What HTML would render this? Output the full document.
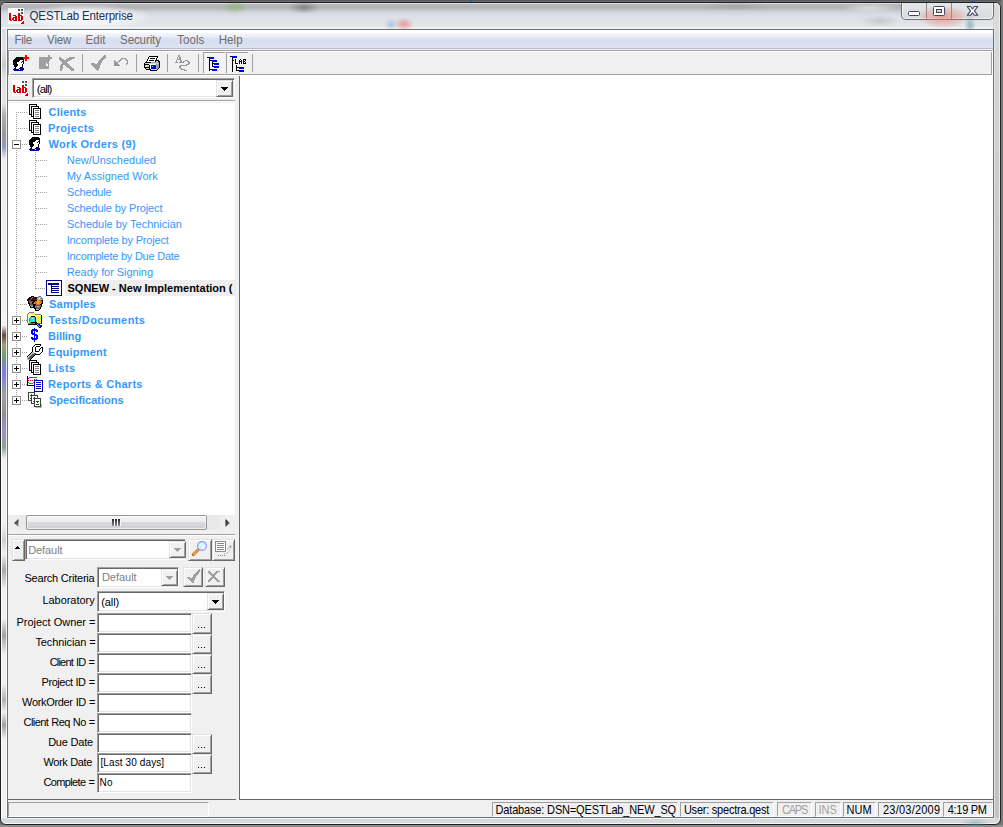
<!DOCTYPE html><html><head><meta charset="utf-8"><style>html,body{margin:0;padding:0;width:1003px;height:827px;overflow:hidden;position:relative;background:#6a6a6a;font-family:"Liberation Sans",sans-serif;} div{box-sizing:border-box}</style></head><body>
<div style="position:absolute;left:0px;top:0px;width:1003px;height:2px;background:linear-gradient(#525252,#747474);"></div>
<div style="position:absolute;left:1001px;top:0px;width:2px;height:827px;background:#7a7a7a;"></div>
<div style="position:absolute;left:0px;top:825px;width:1003px;height:2px;background:#8e8e8e;"></div>
<div style="position:absolute;left:470px;top:1px;width:3px;height:1px;background:#1a64c0;"></div>
<div style="position:absolute;left:972px;top:1px;width:3px;height:1px;background:#1a64c0;"></div>
<div style="position:absolute;left:0px;top:2px;width:1001px;height:823px;border:1px solid #1f2224;border-radius:6px 6px 6px 6px;background:#d8d9da;box-shadow:inset 0 0 0 1px rgba(255,255,255,0.9);"></div>
<div style="position:absolute;left:1px;top:3px;width:999px;height:26px;border-radius:5px 5px 0 0;background:linear-gradient(180deg,#dcdcdc 0px,#dcdcdc 1px,#b8babc 1px,#b0b2b5 4px,#b8babe 6px,#ccced3 8px,#d8dbe2 11px,#dde0e8 14px,#e1e3e7 20px,#e4e6e8 24px,#f0f1f2 24px,#f0f1f2 26px);"></div>
<div style="position:absolute;left:222px;top:3px;width:26px;height:11px;background:radial-gradient(ellipse at 50% 40%, rgba(130,180,100,0.55), rgba(130,180,100,0) 70%);"></div>
<div style="position:absolute;left:840px;top:3px;width:60px;height:10px;background:radial-gradient(ellipse at 50% 50%, rgba(235,236,238,0.7), rgba(235,236,238,0) 70%);"></div>
<div style="position:absolute;left:288px;top:3px;width:32px;height:11px;background:radial-gradient(ellipse at 50% 40%, rgba(80,80,80,0.45), rgba(80,80,80,0) 70%);"></div>
<div style="position:absolute;left:394px;top:17px;width:20px;height:12px;background:radial-gradient(ellipse at 50% 60%, rgba(230,110,100,0.6), rgba(230,110,100,0) 70%);"></div>
<div style="position:absolute;left:384px;top:18px;width:14px;height:11px;background:radial-gradient(ellipse at 50% 60%, rgba(120,170,220,0.5), rgba(120,170,220,0) 70%);"></div>
<div style="position:absolute;left:700px;top:3px;width:70px;height:8px;background:radial-gradient(ellipse at 50% 40%, rgba(120,120,120,0.25), rgba(120,120,120,0) 70%);"></div>
<div style="position:absolute;left:860px;top:15px;width:40px;height:12px;background:radial-gradient(ellipse at 50% 50%, rgba(120,120,120,0.25), rgba(120,120,120,0) 70%);"></div>
<div style="position:absolute;left:2px;top:29px;width:5px;height:789px;background:linear-gradient(180deg,#dcdce6 0px,#e2e2e4 20px,#cacaca 36px,#e4e4e4 50px,#e4e4e4 74px,#b0b0b0 86px,#989898 105px,#9898c0 118px,#eeeeee 130px,#f0f0f0 260px,#f4f4f4 296px,#6a4a3a 306px,#a0a080 316px,#70a070 326px,#7a7af0 343px,#a0a0a0 366px,#909090 386px,#a090c8 401px,#90a090 418px,#f0f0f0 430px,#f0f0f0 495px,#d0d0d0 511px,#f0f0f0 525px,#a8a8a8 541px,#f0f0f0 560px,#f0f0f0 590px,#a0a0a0 606px,#f0f0f0 625px,#f0f0f0 655px,#b0b0b0 671px,#f0f0f0 683px,#a0a0a0 696px,#f0f0f0 710px,#f0f0f0 789px);box-shadow:inset -1px 0 0 rgba(255,255,255,.8);"></div>
<div style="position:absolute;left:994px;top:29px;width:6px;height:789px;background:linear-gradient(180deg,#d8dada 0px,#cfd1d1 100px,#c4c6c6 250px,#c2c4c4 789px);border-left:1px solid #e3e4e4;border-right:1px solid #ececec;"></div>
<div style="position:absolute;left:7px;top:818px;width:988px;height:6px;background:#d8d9da;border-top:1px solid #f4f4f4;border-bottom:1px solid #f0f8fc;"></div>
<div style="position:absolute;left:960px;top:818px;width:30px;height:9px;background:radial-gradient(ellipse at 50% 60%, rgba(90,150,160,0.45), rgba(90,150,160,0) 70%);"></div>
<div style="position:absolute;left:14px;top:3px;width:140px;height:26px;background:radial-gradient(ellipse 50% 50% at 50% 55%, rgba(248,249,250,0.9) 0%, rgba(248,249,250,0.75) 55%, rgba(248,249,250,0) 100%);"></div>
<svg style="position:absolute;left:8px;top:8px;" width="16" height="16" viewBox="0 0 16 16" shape-rendering="crispEdges"><rect x="0" y="0" width="16" height="16" fill="#fff"/><rect x="10" y="1" width="2" height="1" fill="#555"/><rect x="13" y="1" width="2" height="1" fill="#555"/><rect x="10" y="2" width="2" height="1" fill="#555"/><rect x="13" y="2" width="2" height="1" fill="#555"/><rect x="13" y="4" width="2" height="1" fill="#555"/><rect x="13" y="5" width="2" height="1" fill="#555"/><rect x="1" y="5" width="2" height="1" fill="#d00000"/><rect x="10" y="5" width="2" height="1" fill="#d00000"/><rect x="1" y="6" width="2" height="1" fill="#d00000"/><rect x="10" y="6" width="2" height="1" fill="#d00000"/><rect x="1" y="7" width="2" height="1" fill="#d00000"/><rect x="5" y="7" width="3" height="1" fill="#d00000"/><rect x="10" y="7" width="2" height="1" fill="#d00000"/><rect x="12" y="7" width="2" height="1" fill="#d00000"/><rect x="1" y="8" width="2" height="1" fill="#d00000"/><rect x="7" y="8" width="2" height="1" fill="#d00000"/><rect x="10" y="8" width="2" height="1" fill="#d00000"/><rect x="13" y="8" width="2" height="1" fill="#d00000"/><rect x="1" y="9" width="2" height="1" fill="#d00000"/><rect x="5" y="9" width="4" height="1" fill="#d00000"/><rect x="10" y="9" width="2" height="1" fill="#d00000"/><rect x="13" y="9" width="2" height="1" fill="#d00000"/><rect x="1" y="10" width="2" height="1" fill="#d00000"/><rect x="4" y="10" width="2" height="1" fill="#d00000"/><rect x="7" y="10" width="2" height="1" fill="#d00000"/><rect x="10" y="10" width="2" height="1" fill="#d00000"/><rect x="13" y="10" width="2" height="1" fill="#d00000"/><rect x="1" y="11" width="2" height="1" fill="#d00000"/><rect x="4" y="11" width="2" height="1" fill="#d00000"/><rect x="7" y="11" width="2" height="1" fill="#d00000"/><rect x="10" y="11" width="2" height="1" fill="#d00000"/><rect x="13" y="11" width="2" height="1" fill="#d00000"/><rect x="2" y="12" width="2" height="1" fill="#d00000"/><rect x="5" y="12" width="4" height="1" fill="#d00000"/><rect x="10" y="12" width="4" height="1" fill="#d00000"/><rect x="15" y="13" width="1" height="1" fill="#d00000"/><rect x="14" y="14" width="2" height="1" fill="#d00000"/><rect x="13" y="15" width="3" height="1" fill="#d00000"/></svg>
<div style="position:absolute;left:29.60px;top:10.4px;font-size:11.5px;line-height:13.22px;color:#1e3050;font-weight:400;white-space:nowrap;letter-spacing:-0.165px;transform:scaleY(1.08);transform-origin:0 10.60px;">QESTLab Enterprise</div>
<div style="position:absolute;left:993px;top:3px;width:7px;height:26px;border-radius:0 5px 0 0;background:linear-gradient(180deg,#e8e8e8 0px,#dadcdc 3px,#d8dada 26px);box-shadow:inset -1px 0 0 #ececec;"></div>
<div style="position:absolute;left:901px;top:3px;width:93px;height:17px;border:1px solid #6b6e72;border-top:none;border-radius:0 0 5px 5px;background:linear-gradient(#e4e5e6,#d8dadb);box-shadow:inset 1px 0 0 rgba(255,255,255,.7), inset -1px -1px 0 rgba(255,255,255,.7);"></div>
<div style="position:absolute;left:926px;top:3px;width:1px;height:16px;background:#8a8c8e;"></div>
<div style="position:absolute;left:951px;top:3px;width:1px;height:16px;background:#8a8c8e;"></div>
<div style="position:absolute;left:918px;top:6px;width:50px;height:22px;background:radial-gradient(ellipse at 50% 50%, rgba(235,120,105,0.6), rgba(235,120,105,0.25) 50%, rgba(235,120,105,0) 72%);"></div>
<div style="position:absolute;left:964px;top:14px;width:12px;height:16px;background:radial-gradient(ellipse at 50% 70%, rgba(80,140,150,0.5), rgba(80,140,150,0) 70%);"></div>
<div style="position:absolute;left:908px;top:11px;width:12px;height:5px;border:1px solid #3b4660;border-radius:1.5px;background:#fff;"></div>
<div style="position:absolute;left:933px;top:6px;width:12px;height:10px;border:1px solid #3b4660;border-radius:1.5px;background:#fff;"></div>
<div style="position:absolute;left:936px;top:9px;width:6px;height:4px;border:1px solid #3b4660;background:#f0c8c0;"></div>
<svg style="position:absolute;left:966px;top:5px" width="13" height="12" viewBox="0 0 13 12">
<path d="M1.2 1.5 L4.6 1.5 L6.5 3.9 L8.4 1.5 L11.8 1.5 L8.4 5.8 L11.8 10.3 L8.4 10.3 L6.5 7.8 L4.6 10.3 L1.2 10.3 L4.6 5.8 Z" fill="#fff" stroke="#3b4660" stroke-width="1.1" stroke-linejoin="round"/>
</svg>
<div style="position:absolute;left:7px;top:29px;width:987px;height:789px;border:1px solid #6b7075;background:#f0f0f0;"></div>
<div style="position:absolute;left:8px;top:30px;width:985px;height:19px;background:linear-gradient(180deg,#ffffff 0px,#ffffff 2px,#f2f4f9 4px,#e9edf6 7px,#dce1f0 8px,#d9dff0 12px,#dee3f3 18px);border-bottom:1px solid #b6bdcc;"></div>
<div style="position:absolute;left:14.40px;top:34.4px;font-size:11.5px;line-height:13.22px;color:#6d6d6d;font-weight:400;white-space:nowrap;letter-spacing:-0.233px;transform:scaleY(1.08);transform-origin:0 10.60px;">File</div>
<div style="position:absolute;left:47.10px;top:34.4px;font-size:11.5px;line-height:13.22px;color:#6d6d6d;font-weight:400;white-space:nowrap;letter-spacing:-0.167px;transform:scaleY(1.08);transform-origin:0 10.60px;">View</div>
<div style="position:absolute;left:85.60px;top:34.4px;font-size:11.5px;line-height:13.22px;color:#6d6d6d;font-weight:400;white-space:nowrap;letter-spacing:0.033px;transform:scaleY(1.08);transform-origin:0 10.60px;">Edit</div>
<div style="position:absolute;left:120.10px;top:34.4px;font-size:11.5px;line-height:13.22px;color:#6d6d6d;font-weight:400;white-space:nowrap;letter-spacing:-0.100px;transform:scaleY(1.08);transform-origin:0 10.60px;">Security</div>
<div style="position:absolute;left:177.20px;top:34.4px;font-size:11.5px;line-height:13.22px;color:#6d6d6d;font-weight:400;white-space:nowrap;letter-spacing:0.075px;transform:scaleY(1.08);transform-origin:0 10.60px;">Tools</div>
<div style="position:absolute;left:218.70px;top:34.4px;font-size:11.5px;line-height:13.22px;color:#6d6d6d;font-weight:400;white-space:nowrap;letter-spacing:0.067px;transform:scaleY(1.08);transform-origin:0 10.60px;">Help</div>
<div style="position:absolute;left:8px;top:50px;width:985px;height:26px;border-top:1px solid #a0a0a0;border-left:1px solid #a0a0a0;border-bottom:1px solid #fff;border-right:1px solid #fff;box-shadow:inset 1px 1px 0 #fff, inset -1px -1px 0 #a0a0a0;"></div>
<svg style="position:absolute;left:11px;top:57px;" width="14" height="14" viewBox="0 0 14 14" shape-rendering="crispEdges"><rect x="5" y="0" width="7" height="1" fill="#000"/><rect x="4" y="1" width="9" height="1" fill="#000"/><rect x="3" y="2" width="10" height="1" fill="#000"/><rect x="2" y="3" width="7" height="1" fill="#000"/><rect x="9" y="3" width="3" height="1" fill="#fff"/><rect x="12" y="3" width="1" height="1" fill="#000"/><rect x="2" y="4" width="6" height="1" fill="#000"/><rect x="8" y="4" width="3" height="1" fill="#fff"/><rect x="11" y="4" width="2" height="1" fill="#000"/><rect x="2" y="5" width="4" height="1" fill="#000"/><rect x="6" y="5" width="4" height="1" fill="#fff"/><rect x="10" y="5" width="1" height="1" fill="#0000ff"/><rect x="11" y="5" width="1" height="1" fill="#fff"/><rect x="12" y="5" width="1" height="1" fill="#000"/><rect x="2" y="6" width="4" height="1" fill="#000"/><rect x="6" y="6" width="6" height="1" fill="#fff"/><rect x="12" y="6" width="1" height="1" fill="#000"/><rect x="2" y="7" width="5" height="1" fill="#000"/><rect x="7" y="7" width="4" height="1" fill="#fff"/><rect x="11" y="7" width="1" height="1" fill="#000"/><rect x="3" y="8" width="4" height="1" fill="#000"/><rect x="7" y="8" width="4" height="1" fill="#fff"/><rect x="11" y="8" width="1" height="1" fill="#000"/><rect x="3" y="9" width="3" height="1" fill="#000"/><rect x="6" y="9" width="4" height="1" fill="#fff"/><rect x="11" y="9" width="1" height="1" fill="#000"/><rect x="4" y="10" width="1" height="1" fill="#000"/><rect x="5" y="10" width="4" height="1" fill="#fff"/><rect x="9" y="10" width="1" height="1" fill="#000"/><rect x="10" y="10" width="2" height="1" fill="#0000a0"/><rect x="3" y="11" width="2" height="1" fill="#0000a0"/><rect x="5" y="11" width="3" height="1" fill="#fff"/><rect x="8" y="11" width="1" height="1" fill="#000"/><rect x="9" y="11" width="4" height="1" fill="#0000a0"/><rect x="2" y="12" width="6" height="1" fill="#0000a0"/><rect x="8" y="12" width="1" height="1" fill="#fff"/><rect x="9" y="12" width="4" height="1" fill="#0000a0"/><rect x="3" y="13" width="9" height="1" fill="#0000a0"/></svg>
<svg style="position:absolute;left:23px;top:55px;" width="6" height="6" viewBox="0 0 6 6" shape-rendering="crispEdges"><rect x="2" y="0" width="2" height="6" fill="#f00"/><rect x="0" y="2" width="6" height="2" fill="#f00"/></svg>
<svg style="position:absolute;left:36px;top:53px;" width="18" height="18" viewBox="0 0 18 18" shape-rendering="crispEdges"><rect x="12" y="2" width="2" height="1" fill="#a0a0a0"/><rect x="12" y="3" width="2" height="1" fill="#a0a0a0"/><rect x="3" y="4" width="13" height="1" fill="#a0a0a0"/><rect x="3" y="5" width="13" height="1" fill="#a0a0a0"/><rect x="3" y="6" width="11" height="1" fill="#a0a0a0"/><rect x="3" y="7" width="11" height="1" fill="#a0a0a0"/><rect x="3" y="8" width="10" height="1" fill="#a0a0a0"/><rect x="3" y="9" width="10" height="1" fill="#a0a0a0"/><rect x="3" y="10" width="7" height="1" fill="#a0a0a0"/><rect x="10" y="10" width="1" height="1" fill="#fff"/><rect x="11" y="10" width="2" height="1" fill="#a0a0a0"/><rect x="3" y="11" width="7" height="1" fill="#a0a0a0"/><rect x="10" y="11" width="2" height="1" fill="#fff"/><rect x="12" y="11" width="1" height="1" fill="#a0a0a0"/><rect x="3" y="12" width="7" height="1" fill="#a0a0a0"/><rect x="10" y="12" width="2" height="1" fill="#fff"/><rect x="12" y="12" width="1" height="1" fill="#a0a0a0"/><rect x="3" y="13" width="10" height="1" fill="#a0a0a0"/><rect x="3" y="14" width="10" height="1" fill="#a0a0a0"/><rect x="3" y="15" width="10" height="1" fill="#a0a0a0"/></svg>
<svg style="position:absolute;left:57px;top:53px;" width="18" height="18" viewBox="0 0 18 18" shape-rendering="crispEdges"><rect x="2" y="4" width="2" height="1" fill="#a0a0a0"/><rect x="12" y="4" width="6" height="1" fill="#a0a0a0"/><rect x="2" y="5" width="3" height="1" fill="#a0a0a0"/><rect x="10" y="5" width="7" height="1" fill="#a0a0a0"/><rect x="2" y="6" width="5" height="1" fill="#a0a0a0"/><rect x="9" y="6" width="6" height="1" fill="#a0a0a0"/><rect x="3" y="7" width="10" height="1" fill="#a0a0a0"/><rect x="4" y="8" width="7" height="1" fill="#a0a0a0"/><rect x="5" y="9" width="5" height="1" fill="#a0a0a0"/><rect x="5" y="10" width="6" height="1" fill="#a0a0a0"/><rect x="4" y="11" width="8" height="1" fill="#a0a0a0"/><rect x="3" y="12" width="3" height="1" fill="#a0a0a0"/><rect x="8" y="12" width="5" height="1" fill="#a0a0a0"/><rect x="3" y="13" width="3" height="1" fill="#a0a0a0"/><rect x="9" y="13" width="5" height="1" fill="#a0a0a0"/><rect x="3" y="14" width="3" height="1" fill="#a0a0a0"/><rect x="10" y="14" width="5" height="1" fill="#a0a0a0"/><rect x="3" y="15" width="3" height="1" fill="#a0a0a0"/><rect x="12" y="15" width="5" height="1" fill="#a0a0a0"/><rect x="3" y="16" width="2" height="1" fill="#a0a0a0"/><rect x="13" y="16" width="4" height="1" fill="#a0a0a0"/><rect x="3" y="17" width="2" height="1" fill="#a0a0a0"/><rect x="14" y="17" width="3" height="1" fill="#a0a0a0"/></svg>
<div style="position:absolute;left:82px;top:54px;width:1px;height:18px;background:#a0a0a0;"></div>
<div style="position:absolute;left:136px;top:54px;width:1px;height:18px;background:#a0a0a0;"></div>
<div style="position:absolute;left:167px;top:54px;width:1px;height:18px;background:#a0a0a0;"></div>
<div style="position:absolute;left:198px;top:54px;width:1px;height:18px;background:#a0a0a0;"></div>
<div style="position:absolute;left:252px;top:54px;width:1px;height:18px;background:#a0a0a0;"></div>
<svg style="position:absolute;left:88px;top:53px;" width="18" height="18" viewBox="0 0 18 18" shape-rendering="crispEdges"><rect x="16" y="2" width="2" height="1" fill="#a0a0a0"/><rect x="15" y="3" width="3" height="1" fill="#a0a0a0"/><rect x="14" y="4" width="4" height="1" fill="#a0a0a0"/><rect x="13" y="5" width="4" height="1" fill="#a0a0a0"/><rect x="12" y="6" width="4" height="1" fill="#a0a0a0"/><rect x="11" y="7" width="4" height="1" fill="#a0a0a0"/><rect x="10" y="8" width="4" height="1" fill="#a0a0a0"/><rect x="10" y="9" width="4" height="1" fill="#a0a0a0"/><rect x="3" y="10" width="4" height="1" fill="#a0a0a0"/><rect x="9" y="10" width="4" height="1" fill="#a0a0a0"/><rect x="3" y="11" width="10" height="1" fill="#a0a0a0"/><rect x="4" y="12" width="8" height="1" fill="#a0a0a0"/><rect x="5" y="13" width="7" height="1" fill="#a0a0a0"/><rect x="6" y="14" width="6" height="1" fill="#a0a0a0"/><rect x="7" y="15" width="4" height="1" fill="#a0a0a0"/><rect x="8" y="16" width="3" height="1" fill="#a0a0a0"/><rect x="9" y="17" width="1" height="1" fill="#a0a0a0"/></svg>
<svg style="position:absolute;left:111px;top:53px;" width="18" height="14" viewBox="0 0 18 14" shape-rendering="crispEdges"><rect x="10" y="5" width="5" height="1" fill="#999"/><rect x="9" y="6" width="2" height="1" fill="#999"/><rect x="14" y="6" width="2" height="1" fill="#999"/><rect x="3" y="7" width="1" height="1" fill="#999"/><rect x="8" y="7" width="2" height="1" fill="#999"/><rect x="15" y="7" width="2" height="1" fill="#999"/><rect x="3" y="8" width="2" height="1" fill="#999"/><rect x="7" y="8" width="2" height="1" fill="#999"/><rect x="16" y="8" width="1" height="1" fill="#999"/><rect x="3" y="9" width="4" height="1" fill="#999"/><rect x="16" y="9" width="1" height="1" fill="#999"/><rect x="3" y="10" width="4" height="1" fill="#999"/><rect x="15" y="10" width="2" height="1" fill="#999"/><rect x="3" y="11" width="5" height="1" fill="#999"/><rect x="15" y="11" width="1" height="1" fill="#999"/><rect x="3" y="12" width="6" height="1" fill="#999"/></svg>
<svg style="position:absolute;left:142px;top:54px;" width="18" height="18" viewBox="0 0 18 18" shape-rendering="crispEdges"><rect x="7" y="2" width="9" height="1" fill="#000"/><rect x="6" y="3" width="1" height="1" fill="#000"/><rect x="7" y="3" width="8" height="1" fill="#fff"/><rect x="15" y="3" width="1" height="1" fill="#000"/><rect x="6" y="4" width="1" height="1" fill="#000"/><rect x="7" y="4" width="1" height="1" fill="#fff"/><rect x="8" y="4" width="5" height="1" fill="#000"/><rect x="13" y="4" width="1" height="1" fill="#fff"/><rect x="14" y="4" width="1" height="1" fill="#000"/><rect x="5" y="5" width="1" height="1" fill="#000"/><rect x="6" y="5" width="8" height="1" fill="#fff"/><rect x="14" y="5" width="1" height="1" fill="#000"/><rect x="5" y="6" width="1" height="1" fill="#000"/><rect x="6" y="6" width="1" height="1" fill="#fff"/><rect x="7" y="6" width="5" height="1" fill="#000"/><rect x="12" y="6" width="1" height="1" fill="#fff"/><rect x="13" y="6" width="4" height="1" fill="#000"/><rect x="4" y="7" width="1" height="1" fill="#000"/><rect x="5" y="7" width="8" height="1" fill="#fff"/><rect x="13" y="7" width="1" height="1" fill="#000"/><rect x="14" y="7" width="2" height="1" fill="#d4d4d4"/><rect x="16" y="7" width="2" height="1" fill="#000"/><rect x="3" y="8" width="6" height="1" fill="#000"/><rect x="9" y="8" width="8" height="1" fill="#a0a0a0"/><rect x="17" y="8" width="1" height="1" fill="#000"/><rect x="2" y="9" width="1" height="1" fill="#000"/><rect x="3" y="9" width="5" height="1" fill="#d4d4d4"/><rect x="8" y="9" width="8" height="1" fill="#d4d4d4"/><rect x="16" y="9" width="1" height="1" fill="#a0a0a0"/><rect x="17" y="9" width="1" height="1" fill="#000"/><rect x="2" y="10" width="1" height="1" fill="#000"/><rect x="3" y="10" width="4" height="1" fill="#000"/><rect x="7" y="10" width="1" height="1" fill="#d4d4d4"/><rect x="8" y="10" width="6" height="1" fill="#fff"/><rect x="14" y="10" width="3" height="1" fill="#a0a0a0"/><rect x="17" y="10" width="1" height="1" fill="#000"/><rect x="2" y="11" width="1" height="1" fill="#000"/><rect x="3" y="11" width="4" height="1" fill="#d4d4d4"/><rect x="7" y="11" width="1" height="1" fill="#000"/><rect x="8" y="11" width="1" height="1" fill="#fff"/><rect x="9" y="11" width="5" height="1" fill="#0000ff"/><rect x="14" y="11" width="3" height="1" fill="#a0a0a0"/><rect x="17" y="11" width="1" height="1" fill="#000"/><rect x="2" y="12" width="1" height="1" fill="#000"/><rect x="3" y="12" width="4" height="1" fill="#d4d4d4"/><rect x="7" y="12" width="1" height="1" fill="#000"/><rect x="8" y="12" width="1" height="1" fill="#fff"/><rect x="9" y="12" width="1" height="1" fill="#0000ff"/><rect x="10" y="12" width="1" height="1" fill="#00ffff"/><rect x="11" y="12" width="3" height="1" fill="#0000ff"/><rect x="14" y="12" width="3" height="1" fill="#a0a0a0"/><rect x="17" y="12" width="1" height="1" fill="#000"/><rect x="2" y="13" width="1" height="1" fill="#000"/><rect x="3" y="13" width="4" height="1" fill="#000"/><rect x="7" y="13" width="1" height="1" fill="#000"/><rect x="8" y="13" width="1" height="1" fill="#fff"/><rect x="9" y="13" width="5" height="1" fill="#0000ff"/><rect x="14" y="13" width="3" height="1" fill="#a0a0a0"/><rect x="17" y="13" width="1" height="1" fill="#000"/><rect x="3" y="14" width="1" height="1" fill="#000"/><rect x="4" y="14" width="3" height="1" fill="#d4d4d4"/><rect x="7" y="14" width="1" height="1" fill="#000"/><rect x="8" y="14" width="1" height="1" fill="#fff"/><rect x="9" y="14" width="5" height="1" fill="#0000ff"/><rect x="14" y="14" width="2" height="1" fill="#a0a0a0"/><rect x="16" y="14" width="1" height="1" fill="#000"/><rect x="4" y="15" width="4" height="1" fill="#000"/><rect x="8" y="15" width="1" height="1" fill="#000"/><rect x="9" y="15" width="6" height="1" fill="#d4d4d4"/><rect x="15" y="15" width="1" height="1" fill="#000"/><rect x="8" y="16" width="7" height="1" fill="#000"/></svg>
<svg style="position:absolute;left:173px;top:53px;" width="18" height="18" viewBox="0 0 18 18" shape-rendering="crispEdges"><rect x="5" y="2" width="2" height="1" fill="#999"/><rect x="5" y="3" width="2" height="1" fill="#999"/><rect x="4" y="4" width="1" height="1" fill="#999"/><rect x="6" y="4" width="2" height="1" fill="#999"/><rect x="4" y="5" width="1" height="1" fill="#999"/><rect x="6" y="5" width="2" height="1" fill="#999"/><rect x="4" y="6" width="4" height="1" fill="#999"/><rect x="3" y="7" width="1" height="1" fill="#999"/><rect x="7" y="7" width="2" height="1" fill="#999"/><rect x="12" y="7" width="3" height="1" fill="#999"/><rect x="3" y="8" width="1" height="1" fill="#999"/><rect x="7" y="8" width="2" height="1" fill="#999"/><rect x="10" y="8" width="2" height="1" fill="#999"/><rect x="14" y="8" width="2" height="1" fill="#999"/><rect x="2" y="9" width="3" height="1" fill="#999"/><rect x="6" y="9" width="5" height="1" fill="#999"/><rect x="15" y="9" width="2" height="1" fill="#999"/><rect x="15" y="10" width="2" height="1" fill="#999"/><rect x="13" y="11" width="3" height="1" fill="#999"/><rect x="7" y="12" width="7" height="1" fill="#999"/><rect x="6" y="13" width="2" height="1" fill="#999"/><rect x="6" y="14" width="2" height="1" fill="#999"/><rect x="7" y="15" width="2" height="1" fill="#999"/><rect x="8" y="16" width="4" height="1" fill="#999"/><rect x="11" y="17" width="3" height="1" fill="#999"/></svg>
<div style="position:absolute;left:203px;top:52px;width:22px;height:21px;border-top:1px solid #a0a0a0;border-left:1px solid #a0a0a0;background-color:#f8f8f8;background-image:repeating-conic-gradient(#ececec 0 25%, #fcfcfc 0 50%);background-size:2px 2px;"></div>
<div style="position:absolute;left:226px;top:52px;width:22px;height:21px;border-top:1px solid #a0a0a0;border-left:1px solid #a0a0a0;background-color:#f8f8f8;background-image:repeating-conic-gradient(#ececec 0 25%, #fcfcfc 0 50%);background-size:2px 2px;"></div>
<svg style="position:absolute;left:202px;top:51px;" width="24" height="24" viewBox="0 0 24 24" shape-rendering="crispEdges"><rect x="5" y="6" width="2" height="1" fill="#000"/><rect x="7" y="6" width="5" height="1" fill="#0000ff"/><rect x="7" y="7" width="5" height="1" fill="#0000ff"/><rect x="7" y="8" width="1" height="1" fill="#000"/><rect x="7" y="9" width="3" height="1" fill="#000"/><rect x="10" y="9" width="5" height="1" fill="#0000ff"/><rect x="7" y="10" width="1" height="1" fill="#000"/><rect x="10" y="10" width="5" height="1" fill="#0000ff"/><rect x="7" y="11" width="1" height="1" fill="#000"/><rect x="10" y="11" width="1" height="1" fill="#000"/><rect x="7" y="12" width="1" height="1" fill="#000"/><rect x="10" y="12" width="2" height="1" fill="#000"/><rect x="12" y="12" width="5" height="1" fill="#0000ff"/><rect x="7" y="13" width="1" height="1" fill="#000"/><rect x="10" y="13" width="1" height="1" fill="#000"/><rect x="12" y="13" width="5" height="1" fill="#0000ff"/><rect x="7" y="14" width="1" height="1" fill="#000"/><rect x="10" y="14" width="1" height="1" fill="#000"/><rect x="7" y="15" width="1" height="1" fill="#000"/><rect x="10" y="15" width="2" height="1" fill="#000"/><rect x="12" y="15" width="5" height="1" fill="#0000ff"/><rect x="7" y="16" width="1" height="1" fill="#000"/><rect x="12" y="16" width="5" height="1" fill="#0000ff"/><rect x="7" y="17" width="1" height="1" fill="#000"/><rect x="7" y="18" width="3" height="1" fill="#000"/><rect x="10" y="18" width="5" height="1" fill="#0000ff"/><rect x="7" y="19" width="1" height="1" fill="#000"/><rect x="10" y="19" width="5" height="1" fill="#0000ff"/></svg>
<svg style="position:absolute;left:225px;top:51px;" width="24" height="24" viewBox="0 0 24 24" shape-rendering="crispEdges"><rect x="5" y="5" width="2" height="1" fill="#000"/><rect x="7" y="5" width="5" height="1" fill="#0000ff"/><rect x="7" y="6" width="5" height="1" fill="#0000ff"/><rect x="7" y="7" width="1" height="1" fill="#000"/><rect x="7" y="8" width="1" height="1" fill="#000"/><rect x="10" y="8" width="1" height="1" fill="#000"/><rect x="15" y="8" width="1" height="1" fill="#000"/><rect x="18" y="8" width="3" height="1" fill="#000"/><rect x="7" y="9" width="2" height="1" fill="#000"/><rect x="10" y="9" width="1" height="1" fill="#000"/><rect x="14" y="9" width="1" height="1" fill="#000"/><rect x="16" y="9" width="1" height="1" fill="#000"/><rect x="18" y="9" width="1" height="1" fill="#000"/><rect x="20" y="9" width="1" height="1" fill="#000"/><rect x="7" y="10" width="1" height="1" fill="#000"/><rect x="10" y="10" width="1" height="1" fill="#000"/><rect x="14" y="10" width="3" height="1" fill="#000"/><rect x="18" y="10" width="2" height="1" fill="#000"/><rect x="7" y="11" width="1" height="1" fill="#000"/><rect x="10" y="11" width="1" height="1" fill="#000"/><rect x="14" y="11" width="1" height="1" fill="#000"/><rect x="16" y="11" width="1" height="1" fill="#000"/><rect x="18" y="11" width="1" height="1" fill="#000"/><rect x="20" y="11" width="1" height="1" fill="#000"/><rect x="7" y="12" width="1" height="1" fill="#000"/><rect x="10" y="12" width="3" height="1" fill="#000"/><rect x="14" y="12" width="1" height="1" fill="#000"/><rect x="16" y="12" width="1" height="1" fill="#000"/><rect x="18" y="12" width="3" height="1" fill="#000"/><rect x="7" y="13" width="1" height="1" fill="#000"/><rect x="7" y="14" width="1" height="1" fill="#000"/><rect x="11" y="14" width="1" height="1" fill="#000"/><rect x="7" y="15" width="1" height="1" fill="#000"/><rect x="11" y="15" width="1" height="1" fill="#000"/><rect x="7" y="16" width="1" height="1" fill="#000"/><rect x="11" y="16" width="3" height="1" fill="#000"/><rect x="14" y="16" width="5" height="1" fill="#0000ff"/><rect x="7" y="17" width="1" height="1" fill="#000"/><rect x="11" y="17" width="1" height="1" fill="#000"/><rect x="14" y="17" width="5" height="1" fill="#0000ff"/><rect x="7" y="18" width="1" height="1" fill="#000"/><rect x="11" y="18" width="1" height="1" fill="#000"/><rect x="7" y="19" width="1" height="1" fill="#000"/><rect x="11" y="19" width="3" height="1" fill="#000"/><rect x="14" y="19" width="5" height="1" fill="#0000ff"/><rect x="7" y="20" width="1" height="1" fill="#000"/><rect x="14" y="20" width="5" height="1" fill="#0000ff"/></svg>
<svg style="position:absolute;left:12px;top:80px;" width="16" height="16" viewBox="0 0 16 16" shape-rendering="crispEdges"><rect x="0" y="0" width="16" height="16" fill="#fff"/><rect x="10" y="1" width="2" height="1" fill="#555"/><rect x="13" y="1" width="2" height="1" fill="#555"/><rect x="10" y="2" width="2" height="1" fill="#555"/><rect x="13" y="2" width="2" height="1" fill="#555"/><rect x="13" y="4" width="2" height="1" fill="#555"/><rect x="13" y="5" width="2" height="1" fill="#555"/><rect x="1" y="5" width="2" height="1" fill="#d00000"/><rect x="10" y="5" width="2" height="1" fill="#d00000"/><rect x="1" y="6" width="2" height="1" fill="#d00000"/><rect x="10" y="6" width="2" height="1" fill="#d00000"/><rect x="1" y="7" width="2" height="1" fill="#d00000"/><rect x="5" y="7" width="3" height="1" fill="#d00000"/><rect x="10" y="7" width="2" height="1" fill="#d00000"/><rect x="12" y="7" width="2" height="1" fill="#d00000"/><rect x="1" y="8" width="2" height="1" fill="#d00000"/><rect x="7" y="8" width="2" height="1" fill="#d00000"/><rect x="10" y="8" width="2" height="1" fill="#d00000"/><rect x="13" y="8" width="2" height="1" fill="#d00000"/><rect x="1" y="9" width="2" height="1" fill="#d00000"/><rect x="5" y="9" width="4" height="1" fill="#d00000"/><rect x="10" y="9" width="2" height="1" fill="#d00000"/><rect x="13" y="9" width="2" height="1" fill="#d00000"/><rect x="1" y="10" width="2" height="1" fill="#d00000"/><rect x="4" y="10" width="2" height="1" fill="#d00000"/><rect x="7" y="10" width="2" height="1" fill="#d00000"/><rect x="10" y="10" width="2" height="1" fill="#d00000"/><rect x="13" y="10" width="2" height="1" fill="#d00000"/><rect x="1" y="11" width="2" height="1" fill="#d00000"/><rect x="4" y="11" width="2" height="1" fill="#d00000"/><rect x="7" y="11" width="2" height="1" fill="#d00000"/><rect x="10" y="11" width="2" height="1" fill="#d00000"/><rect x="13" y="11" width="2" height="1" fill="#d00000"/><rect x="2" y="12" width="2" height="1" fill="#d00000"/><rect x="5" y="12" width="4" height="1" fill="#d00000"/><rect x="10" y="12" width="4" height="1" fill="#d00000"/><rect x="15" y="13" width="1" height="1" fill="#d00000"/><rect x="14" y="14" width="2" height="1" fill="#d00000"/><rect x="13" y="15" width="3" height="1" fill="#d00000"/></svg>
<div style="position:absolute;left:32px;top:78px;width:203px;height:20px;background:#fff;border-top:1px solid #a0a0a0;border-left:1px solid #a0a0a0;border-bottom:1px solid #fff;border-right:1px solid #fff;box-shadow:inset 1px 1px 0 #696969, inset -1px -1px 0 #e3e3e3;"></div>
<div style="position:absolute;left:216px;top:80px;width:17px;height:17px;background:#f0f0f0;border-top:1px solid #e3e3e3;border-left:1px solid #e3e3e3;border-bottom:1px solid #696969;border-right:1px solid #696969;box-shadow:inset 1px 1px 0 #fff, inset -1px -1px 0 #a0a0a0;"></div>
<svg style="position:absolute;left:221px;top:87px;" width="7" height="4" viewBox="0 0 7 4" shape-rendering="crispEdges"><rect x="0" y="0" width="7" height="1" fill="#000"/><rect x="1" y="1" width="5" height="1" fill="#000"/><rect x="2" y="2" width="3" height="1" fill="#000"/><rect x="3" y="3" width="1" height="1" fill="#000"/></svg>
<div style="position:absolute;left:36.80px;top:82.9px;font-size:11.5px;line-height:13.22px;color:#000;font-weight:400;white-space:nowrap;letter-spacing:-0.900px;">(all)</div>
<div style="position:absolute;left:8px;top:100px;width:227px;height:1px;background:#a0a0a0;"></div>
<div style="position:absolute;left:8px;top:101px;width:227px;height:414px;background:#fff;"></div>
<div style="position:absolute;left:9px;top:102px;width:226px;height:1px;background:#f0f0f0;"></div>
<div style="position:absolute;left:8px;top:534px;width:227px;height:1px;background:#a0a0a0;"></div>
<div style="position:absolute;left:8px;top:535px;width:227px;height:1px;background:#fff;"></div>
<svg style="position:absolute;left:16px;top:112px;" width="1" height="289" viewBox="0 0 1 289" shape-rendering="crispEdges"><rect x="0" y="0" width="1" height="1" fill="#a0a0a0"/><rect x="0" y="2" width="1" height="1" fill="#a0a0a0"/><rect x="0" y="4" width="1" height="1" fill="#a0a0a0"/><rect x="0" y="6" width="1" height="1" fill="#a0a0a0"/><rect x="0" y="8" width="1" height="1" fill="#a0a0a0"/><rect x="0" y="10" width="1" height="1" fill="#a0a0a0"/><rect x="0" y="12" width="1" height="1" fill="#a0a0a0"/><rect x="0" y="14" width="1" height="1" fill="#a0a0a0"/><rect x="0" y="16" width="1" height="1" fill="#a0a0a0"/><rect x="0" y="18" width="1" height="1" fill="#a0a0a0"/><rect x="0" y="20" width="1" height="1" fill="#a0a0a0"/><rect x="0" y="22" width="1" height="1" fill="#a0a0a0"/><rect x="0" y="24" width="1" height="1" fill="#a0a0a0"/><rect x="0" y="26" width="1" height="1" fill="#a0a0a0"/><rect x="0" y="28" width="1" height="1" fill="#a0a0a0"/><rect x="0" y="30" width="1" height="1" fill="#a0a0a0"/><rect x="0" y="32" width="1" height="1" fill="#a0a0a0"/><rect x="0" y="34" width="1" height="1" fill="#a0a0a0"/><rect x="0" y="36" width="1" height="1" fill="#a0a0a0"/><rect x="0" y="38" width="1" height="1" fill="#a0a0a0"/><rect x="0" y="40" width="1" height="1" fill="#a0a0a0"/><rect x="0" y="42" width="1" height="1" fill="#a0a0a0"/><rect x="0" y="44" width="1" height="1" fill="#a0a0a0"/><rect x="0" y="46" width="1" height="1" fill="#a0a0a0"/><rect x="0" y="48" width="1" height="1" fill="#a0a0a0"/><rect x="0" y="50" width="1" height="1" fill="#a0a0a0"/><rect x="0" y="52" width="1" height="1" fill="#a0a0a0"/><rect x="0" y="54" width="1" height="1" fill="#a0a0a0"/><rect x="0" y="56" width="1" height="1" fill="#a0a0a0"/><rect x="0" y="58" width="1" height="1" fill="#a0a0a0"/><rect x="0" y="60" width="1" height="1" fill="#a0a0a0"/><rect x="0" y="62" width="1" height="1" fill="#a0a0a0"/><rect x="0" y="64" width="1" height="1" fill="#a0a0a0"/><rect x="0" y="66" width="1" height="1" fill="#a0a0a0"/><rect x="0" y="68" width="1" height="1" fill="#a0a0a0"/><rect x="0" y="70" width="1" height="1" fill="#a0a0a0"/><rect x="0" y="72" width="1" height="1" fill="#a0a0a0"/><rect x="0" y="74" width="1" height="1" fill="#a0a0a0"/><rect x="0" y="76" width="1" height="1" fill="#a0a0a0"/><rect x="0" y="78" width="1" height="1" fill="#a0a0a0"/><rect x="0" y="80" width="1" height="1" fill="#a0a0a0"/><rect x="0" y="82" width="1" height="1" fill="#a0a0a0"/><rect x="0" y="84" width="1" height="1" fill="#a0a0a0"/><rect x="0" y="86" width="1" height="1" fill="#a0a0a0"/><rect x="0" y="88" width="1" height="1" fill="#a0a0a0"/><rect x="0" y="90" width="1" height="1" fill="#a0a0a0"/><rect x="0" y="92" width="1" height="1" fill="#a0a0a0"/><rect x="0" y="94" width="1" height="1" fill="#a0a0a0"/><rect x="0" y="96" width="1" height="1" fill="#a0a0a0"/><rect x="0" y="98" width="1" height="1" fill="#a0a0a0"/><rect x="0" y="100" width="1" height="1" fill="#a0a0a0"/><rect x="0" y="102" width="1" height="1" fill="#a0a0a0"/><rect x="0" y="104" width="1" height="1" fill="#a0a0a0"/><rect x="0" y="106" width="1" height="1" fill="#a0a0a0"/><rect x="0" y="108" width="1" height="1" fill="#a0a0a0"/><rect x="0" y="110" width="1" height="1" fill="#a0a0a0"/><rect x="0" y="112" width="1" height="1" fill="#a0a0a0"/><rect x="0" y="114" width="1" height="1" fill="#a0a0a0"/><rect x="0" y="116" width="1" height="1" fill="#a0a0a0"/><rect x="0" y="118" width="1" height="1" fill="#a0a0a0"/><rect x="0" y="120" width="1" height="1" fill="#a0a0a0"/><rect x="0" y="122" width="1" height="1" fill="#a0a0a0"/><rect x="0" y="124" width="1" height="1" fill="#a0a0a0"/><rect x="0" y="126" width="1" height="1" fill="#a0a0a0"/><rect x="0" y="128" width="1" height="1" fill="#a0a0a0"/><rect x="0" y="130" width="1" height="1" fill="#a0a0a0"/><rect x="0" y="132" width="1" height="1" fill="#a0a0a0"/><rect x="0" y="134" width="1" height="1" fill="#a0a0a0"/><rect x="0" y="136" width="1" height="1" fill="#a0a0a0"/><rect x="0" y="138" width="1" height="1" fill="#a0a0a0"/><rect x="0" y="140" width="1" height="1" fill="#a0a0a0"/><rect x="0" y="142" width="1" height="1" fill="#a0a0a0"/><rect x="0" y="144" width="1" height="1" fill="#a0a0a0"/><rect x="0" y="146" width="1" height="1" fill="#a0a0a0"/><rect x="0" y="148" width="1" height="1" fill="#a0a0a0"/><rect x="0" y="150" width="1" height="1" fill="#a0a0a0"/><rect x="0" y="152" width="1" height="1" fill="#a0a0a0"/><rect x="0" y="154" width="1" height="1" fill="#a0a0a0"/><rect x="0" y="156" width="1" height="1" fill="#a0a0a0"/><rect x="0" y="158" width="1" height="1" fill="#a0a0a0"/><rect x="0" y="160" width="1" height="1" fill="#a0a0a0"/><rect x="0" y="162" width="1" height="1" fill="#a0a0a0"/><rect x="0" y="164" width="1" height="1" fill="#a0a0a0"/><rect x="0" y="166" width="1" height="1" fill="#a0a0a0"/><rect x="0" y="168" width="1" height="1" fill="#a0a0a0"/><rect x="0" y="170" width="1" height="1" fill="#a0a0a0"/><rect x="0" y="172" width="1" height="1" fill="#a0a0a0"/><rect x="0" y="174" width="1" height="1" fill="#a0a0a0"/><rect x="0" y="176" width="1" height="1" fill="#a0a0a0"/><rect x="0" y="178" width="1" height="1" fill="#a0a0a0"/><rect x="0" y="180" width="1" height="1" fill="#a0a0a0"/><rect x="0" y="182" width="1" height="1" fill="#a0a0a0"/><rect x="0" y="184" width="1" height="1" fill="#a0a0a0"/><rect x="0" y="186" width="1" height="1" fill="#a0a0a0"/><rect x="0" y="188" width="1" height="1" fill="#a0a0a0"/><rect x="0" y="190" width="1" height="1" fill="#a0a0a0"/><rect x="0" y="192" width="1" height="1" fill="#a0a0a0"/><rect x="0" y="194" width="1" height="1" fill="#a0a0a0"/><rect x="0" y="196" width="1" height="1" fill="#a0a0a0"/><rect x="0" y="198" width="1" height="1" fill="#a0a0a0"/><rect x="0" y="200" width="1" height="1" fill="#a0a0a0"/><rect x="0" y="202" width="1" height="1" fill="#a0a0a0"/><rect x="0" y="204" width="1" height="1" fill="#a0a0a0"/><rect x="0" y="206" width="1" height="1" fill="#a0a0a0"/><rect x="0" y="208" width="1" height="1" fill="#a0a0a0"/><rect x="0" y="210" width="1" height="1" fill="#a0a0a0"/><rect x="0" y="212" width="1" height="1" fill="#a0a0a0"/><rect x="0" y="214" width="1" height="1" fill="#a0a0a0"/><rect x="0" y="216" width="1" height="1" fill="#a0a0a0"/><rect x="0" y="218" width="1" height="1" fill="#a0a0a0"/><rect x="0" y="220" width="1" height="1" fill="#a0a0a0"/><rect x="0" y="222" width="1" height="1" fill="#a0a0a0"/><rect x="0" y="224" width="1" height="1" fill="#a0a0a0"/><rect x="0" y="226" width="1" height="1" fill="#a0a0a0"/><rect x="0" y="228" width="1" height="1" fill="#a0a0a0"/><rect x="0" y="230" width="1" height="1" fill="#a0a0a0"/><rect x="0" y="232" width="1" height="1" fill="#a0a0a0"/><rect x="0" y="234" width="1" height="1" fill="#a0a0a0"/><rect x="0" y="236" width="1" height="1" fill="#a0a0a0"/><rect x="0" y="238" width="1" height="1" fill="#a0a0a0"/><rect x="0" y="240" width="1" height="1" fill="#a0a0a0"/><rect x="0" y="242" width="1" height="1" fill="#a0a0a0"/><rect x="0" y="244" width="1" height="1" fill="#a0a0a0"/><rect x="0" y="246" width="1" height="1" fill="#a0a0a0"/><rect x="0" y="248" width="1" height="1" fill="#a0a0a0"/><rect x="0" y="250" width="1" height="1" fill="#a0a0a0"/><rect x="0" y="252" width="1" height="1" fill="#a0a0a0"/><rect x="0" y="254" width="1" height="1" fill="#a0a0a0"/><rect x="0" y="256" width="1" height="1" fill="#a0a0a0"/><rect x="0" y="258" width="1" height="1" fill="#a0a0a0"/><rect x="0" y="260" width="1" height="1" fill="#a0a0a0"/><rect x="0" y="262" width="1" height="1" fill="#a0a0a0"/><rect x="0" y="264" width="1" height="1" fill="#a0a0a0"/><rect x="0" y="266" width="1" height="1" fill="#a0a0a0"/><rect x="0" y="268" width="1" height="1" fill="#a0a0a0"/><rect x="0" y="270" width="1" height="1" fill="#a0a0a0"/><rect x="0" y="272" width="1" height="1" fill="#a0a0a0"/><rect x="0" y="274" width="1" height="1" fill="#a0a0a0"/><rect x="0" y="276" width="1" height="1" fill="#a0a0a0"/><rect x="0" y="278" width="1" height="1" fill="#a0a0a0"/><rect x="0" y="280" width="1" height="1" fill="#a0a0a0"/><rect x="0" y="282" width="1" height="1" fill="#a0a0a0"/><rect x="0" y="284" width="1" height="1" fill="#a0a0a0"/><rect x="0" y="286" width="1" height="1" fill="#a0a0a0"/><rect x="0" y="288" width="1" height="1" fill="#a0a0a0"/></svg>
<svg style="position:absolute;left:35px;top:152px;" width="1" height="137" viewBox="0 0 1 137" shape-rendering="crispEdges"><rect x="0" y="0" width="1" height="1" fill="#a0a0a0"/><rect x="0" y="2" width="1" height="1" fill="#a0a0a0"/><rect x="0" y="4" width="1" height="1" fill="#a0a0a0"/><rect x="0" y="6" width="1" height="1" fill="#a0a0a0"/><rect x="0" y="8" width="1" height="1" fill="#a0a0a0"/><rect x="0" y="10" width="1" height="1" fill="#a0a0a0"/><rect x="0" y="12" width="1" height="1" fill="#a0a0a0"/><rect x="0" y="14" width="1" height="1" fill="#a0a0a0"/><rect x="0" y="16" width="1" height="1" fill="#a0a0a0"/><rect x="0" y="18" width="1" height="1" fill="#a0a0a0"/><rect x="0" y="20" width="1" height="1" fill="#a0a0a0"/><rect x="0" y="22" width="1" height="1" fill="#a0a0a0"/><rect x="0" y="24" width="1" height="1" fill="#a0a0a0"/><rect x="0" y="26" width="1" height="1" fill="#a0a0a0"/><rect x="0" y="28" width="1" height="1" fill="#a0a0a0"/><rect x="0" y="30" width="1" height="1" fill="#a0a0a0"/><rect x="0" y="32" width="1" height="1" fill="#a0a0a0"/><rect x="0" y="34" width="1" height="1" fill="#a0a0a0"/><rect x="0" y="36" width="1" height="1" fill="#a0a0a0"/><rect x="0" y="38" width="1" height="1" fill="#a0a0a0"/><rect x="0" y="40" width="1" height="1" fill="#a0a0a0"/><rect x="0" y="42" width="1" height="1" fill="#a0a0a0"/><rect x="0" y="44" width="1" height="1" fill="#a0a0a0"/><rect x="0" y="46" width="1" height="1" fill="#a0a0a0"/><rect x="0" y="48" width="1" height="1" fill="#a0a0a0"/><rect x="0" y="50" width="1" height="1" fill="#a0a0a0"/><rect x="0" y="52" width="1" height="1" fill="#a0a0a0"/><rect x="0" y="54" width="1" height="1" fill="#a0a0a0"/><rect x="0" y="56" width="1" height="1" fill="#a0a0a0"/><rect x="0" y="58" width="1" height="1" fill="#a0a0a0"/><rect x="0" y="60" width="1" height="1" fill="#a0a0a0"/><rect x="0" y="62" width="1" height="1" fill="#a0a0a0"/><rect x="0" y="64" width="1" height="1" fill="#a0a0a0"/><rect x="0" y="66" width="1" height="1" fill="#a0a0a0"/><rect x="0" y="68" width="1" height="1" fill="#a0a0a0"/><rect x="0" y="70" width="1" height="1" fill="#a0a0a0"/><rect x="0" y="72" width="1" height="1" fill="#a0a0a0"/><rect x="0" y="74" width="1" height="1" fill="#a0a0a0"/><rect x="0" y="76" width="1" height="1" fill="#a0a0a0"/><rect x="0" y="78" width="1" height="1" fill="#a0a0a0"/><rect x="0" y="80" width="1" height="1" fill="#a0a0a0"/><rect x="0" y="82" width="1" height="1" fill="#a0a0a0"/><rect x="0" y="84" width="1" height="1" fill="#a0a0a0"/><rect x="0" y="86" width="1" height="1" fill="#a0a0a0"/><rect x="0" y="88" width="1" height="1" fill="#a0a0a0"/><rect x="0" y="90" width="1" height="1" fill="#a0a0a0"/><rect x="0" y="92" width="1" height="1" fill="#a0a0a0"/><rect x="0" y="94" width="1" height="1" fill="#a0a0a0"/><rect x="0" y="96" width="1" height="1" fill="#a0a0a0"/><rect x="0" y="98" width="1" height="1" fill="#a0a0a0"/><rect x="0" y="100" width="1" height="1" fill="#a0a0a0"/><rect x="0" y="102" width="1" height="1" fill="#a0a0a0"/><rect x="0" y="104" width="1" height="1" fill="#a0a0a0"/><rect x="0" y="106" width="1" height="1" fill="#a0a0a0"/><rect x="0" y="108" width="1" height="1" fill="#a0a0a0"/><rect x="0" y="110" width="1" height="1" fill="#a0a0a0"/><rect x="0" y="112" width="1" height="1" fill="#a0a0a0"/><rect x="0" y="114" width="1" height="1" fill="#a0a0a0"/><rect x="0" y="116" width="1" height="1" fill="#a0a0a0"/><rect x="0" y="118" width="1" height="1" fill="#a0a0a0"/><rect x="0" y="120" width="1" height="1" fill="#a0a0a0"/><rect x="0" y="122" width="1" height="1" fill="#a0a0a0"/><rect x="0" y="124" width="1" height="1" fill="#a0a0a0"/><rect x="0" y="126" width="1" height="1" fill="#a0a0a0"/><rect x="0" y="128" width="1" height="1" fill="#a0a0a0"/><rect x="0" y="130" width="1" height="1" fill="#a0a0a0"/><rect x="0" y="132" width="1" height="1" fill="#a0a0a0"/><rect x="0" y="134" width="1" height="1" fill="#a0a0a0"/><rect x="0" y="136" width="1" height="1" fill="#a0a0a0"/></svg>
<svg style="position:absolute;left:16px;top:112px;" width="11" height="1" viewBox="0 0 11 1" shape-rendering="crispEdges"><rect x="0" y="0" width="1" height="1" fill="#a0a0a0"/><rect x="2" y="0" width="1" height="1" fill="#a0a0a0"/><rect x="4" y="0" width="1" height="1" fill="#a0a0a0"/><rect x="6" y="0" width="1" height="1" fill="#a0a0a0"/><rect x="8" y="0" width="1" height="1" fill="#a0a0a0"/><rect x="10" y="0" width="1" height="1" fill="#a0a0a0"/></svg>
<div style="position:absolute;left:48.60px;top:105.86px;font-size:11px;line-height:12.65px;color:#3399ff;font-weight:700;white-space:nowrap;letter-spacing:0.167px;">Clients</div>
<svg style="position:absolute;left:16px;top:128px;" width="11" height="1" viewBox="0 0 11 1" shape-rendering="crispEdges"><rect x="0" y="0" width="1" height="1" fill="#a0a0a0"/><rect x="2" y="0" width="1" height="1" fill="#a0a0a0"/><rect x="4" y="0" width="1" height="1" fill="#a0a0a0"/><rect x="6" y="0" width="1" height="1" fill="#a0a0a0"/><rect x="8" y="0" width="1" height="1" fill="#a0a0a0"/><rect x="10" y="0" width="1" height="1" fill="#a0a0a0"/></svg>
<div style="position:absolute;left:48.00px;top:121.86px;font-size:11px;line-height:12.65px;color:#3399ff;font-weight:700;white-space:nowrap;letter-spacing:0.343px;">Projects</div>
<svg style="position:absolute;left:16px;top:144px;" width="11" height="1" viewBox="0 0 11 1" shape-rendering="crispEdges"><rect x="0" y="0" width="1" height="1" fill="#a0a0a0"/><rect x="2" y="0" width="1" height="1" fill="#a0a0a0"/><rect x="4" y="0" width="1" height="1" fill="#a0a0a0"/><rect x="6" y="0" width="1" height="1" fill="#a0a0a0"/><rect x="8" y="0" width="1" height="1" fill="#a0a0a0"/><rect x="10" y="0" width="1" height="1" fill="#a0a0a0"/></svg>
<div style="position:absolute;left:12px;top:140px;width:9px;height:9px;border:1px solid #919191;background:#fff;"></div>
<div style="position:absolute;left:14px;top:144px;width:5px;height:1px;background:#000;"></div>
<div style="position:absolute;left:48.60px;top:137.86px;font-size:11px;line-height:12.65px;color:#3399ff;font-weight:700;white-space:nowrap;letter-spacing:0.293px;">Work Orders (9)</div>
<svg style="position:absolute;left:36px;top:160px;" width="11" height="1" viewBox="0 0 11 1" shape-rendering="crispEdges"><rect x="0" y="0" width="1" height="1" fill="#a0a0a0"/><rect x="2" y="0" width="1" height="1" fill="#a0a0a0"/><rect x="4" y="0" width="1" height="1" fill="#a0a0a0"/><rect x="6" y="0" width="1" height="1" fill="#a0a0a0"/><rect x="8" y="0" width="1" height="1" fill="#a0a0a0"/><rect x="10" y="0" width="1" height="1" fill="#a0a0a0"/></svg>
<div style="position:absolute;left:66.70px;top:153.86px;font-size:11px;line-height:12.65px;color:#3399ff;font-weight:400;white-space:nowrap;letter-spacing:-0.000px;">New/Unscheduled</div>
<svg style="position:absolute;left:36px;top:176px;" width="11" height="1" viewBox="0 0 11 1" shape-rendering="crispEdges"><rect x="0" y="0" width="1" height="1" fill="#a0a0a0"/><rect x="2" y="0" width="1" height="1" fill="#a0a0a0"/><rect x="4" y="0" width="1" height="1" fill="#a0a0a0"/><rect x="6" y="0" width="1" height="1" fill="#a0a0a0"/><rect x="8" y="0" width="1" height="1" fill="#a0a0a0"/><rect x="10" y="0" width="1" height="1" fill="#a0a0a0"/></svg>
<div style="position:absolute;left:66.70px;top:169.86px;font-size:11px;line-height:12.65px;color:#3399ff;font-weight:400;white-space:nowrap;letter-spacing:0.007px;">My Assigned Work</div>
<svg style="position:absolute;left:36px;top:192px;" width="11" height="1" viewBox="0 0 11 1" shape-rendering="crispEdges"><rect x="0" y="0" width="1" height="1" fill="#a0a0a0"/><rect x="2" y="0" width="1" height="1" fill="#a0a0a0"/><rect x="4" y="0" width="1" height="1" fill="#a0a0a0"/><rect x="6" y="0" width="1" height="1" fill="#a0a0a0"/><rect x="8" y="0" width="1" height="1" fill="#a0a0a0"/><rect x="10" y="0" width="1" height="1" fill="#a0a0a0"/></svg>
<div style="position:absolute;left:67.00px;top:185.86px;font-size:11px;line-height:12.65px;color:#3399ff;font-weight:400;white-space:nowrap;letter-spacing:-0.171px;">Schedule</div>
<svg style="position:absolute;left:36px;top:208px;" width="11" height="1" viewBox="0 0 11 1" shape-rendering="crispEdges"><rect x="0" y="0" width="1" height="1" fill="#a0a0a0"/><rect x="2" y="0" width="1" height="1" fill="#a0a0a0"/><rect x="4" y="0" width="1" height="1" fill="#a0a0a0"/><rect x="6" y="0" width="1" height="1" fill="#a0a0a0"/><rect x="8" y="0" width="1" height="1" fill="#a0a0a0"/><rect x="10" y="0" width="1" height="1" fill="#a0a0a0"/></svg>
<div style="position:absolute;left:67.00px;top:201.86px;font-size:11px;line-height:12.65px;color:#3399ff;font-weight:400;white-space:nowrap;letter-spacing:-0.128px;">Schedule by Project</div>
<svg style="position:absolute;left:36px;top:224px;" width="11" height="1" viewBox="0 0 11 1" shape-rendering="crispEdges"><rect x="0" y="0" width="1" height="1" fill="#a0a0a0"/><rect x="2" y="0" width="1" height="1" fill="#a0a0a0"/><rect x="4" y="0" width="1" height="1" fill="#a0a0a0"/><rect x="6" y="0" width="1" height="1" fill="#a0a0a0"/><rect x="8" y="0" width="1" height="1" fill="#a0a0a0"/><rect x="10" y="0" width="1" height="1" fill="#a0a0a0"/></svg>
<div style="position:absolute;left:67.00px;top:217.86px;font-size:11px;line-height:12.65px;color:#3399ff;font-weight:400;white-space:nowrap;letter-spacing:-0.024px;">Schedule by Technician</div>
<svg style="position:absolute;left:36px;top:240px;" width="11" height="1" viewBox="0 0 11 1" shape-rendering="crispEdges"><rect x="0" y="0" width="1" height="1" fill="#a0a0a0"/><rect x="2" y="0" width="1" height="1" fill="#a0a0a0"/><rect x="4" y="0" width="1" height="1" fill="#a0a0a0"/><rect x="6" y="0" width="1" height="1" fill="#a0a0a0"/><rect x="8" y="0" width="1" height="1" fill="#a0a0a0"/><rect x="10" y="0" width="1" height="1" fill="#a0a0a0"/></svg>
<div style="position:absolute;left:66.70px;top:233.86px;font-size:11px;line-height:12.65px;color:#3399ff;font-weight:400;white-space:nowrap;letter-spacing:-0.180px;">Incomplete by Project</div>
<svg style="position:absolute;left:36px;top:256px;" width="11" height="1" viewBox="0 0 11 1" shape-rendering="crispEdges"><rect x="0" y="0" width="1" height="1" fill="#a0a0a0"/><rect x="2" y="0" width="1" height="1" fill="#a0a0a0"/><rect x="4" y="0" width="1" height="1" fill="#a0a0a0"/><rect x="6" y="0" width="1" height="1" fill="#a0a0a0"/><rect x="8" y="0" width="1" height="1" fill="#a0a0a0"/><rect x="10" y="0" width="1" height="1" fill="#a0a0a0"/></svg>
<div style="position:absolute;left:66.70px;top:249.86px;font-size:11px;line-height:12.65px;color:#3399ff;font-weight:400;white-space:nowrap;letter-spacing:-0.238px;">Incomplete by Due Date</div>
<svg style="position:absolute;left:36px;top:272px;" width="11" height="1" viewBox="0 0 11 1" shape-rendering="crispEdges"><rect x="0" y="0" width="1" height="1" fill="#a0a0a0"/><rect x="2" y="0" width="1" height="1" fill="#a0a0a0"/><rect x="4" y="0" width="1" height="1" fill="#a0a0a0"/><rect x="6" y="0" width="1" height="1" fill="#a0a0a0"/><rect x="8" y="0" width="1" height="1" fill="#a0a0a0"/><rect x="10" y="0" width="1" height="1" fill="#a0a0a0"/></svg>
<div style="position:absolute;left:66.70px;top:265.86px;font-size:11px;line-height:12.65px;color:#3399ff;font-weight:400;white-space:nowrap;letter-spacing:-0.069px;">Ready for Signing</div>
<svg style="position:absolute;left:36px;top:288px;" width="11" height="1" viewBox="0 0 11 1" shape-rendering="crispEdges"><rect x="0" y="0" width="1" height="1" fill="#a0a0a0"/><rect x="2" y="0" width="1" height="1" fill="#a0a0a0"/><rect x="4" y="0" width="1" height="1" fill="#a0a0a0"/><rect x="6" y="0" width="1" height="1" fill="#a0a0a0"/><rect x="8" y="0" width="1" height="1" fill="#a0a0a0"/><rect x="10" y="0" width="1" height="1" fill="#a0a0a0"/></svg>
<div style="position:absolute;left:65px;top:280px;width:172px;height:16px;background:#eeeeee;"></div>
<div style="position:absolute;left:67.5px;top:282px;font-size:11px;line-height:12.65px;color:#000;font-weight:700;white-space:nowrap;">SQNEW - New Implementation (</div>
<svg style="position:absolute;left:16px;top:304px;" width="11" height="1" viewBox="0 0 11 1" shape-rendering="crispEdges"><rect x="0" y="0" width="1" height="1" fill="#a0a0a0"/><rect x="2" y="0" width="1" height="1" fill="#a0a0a0"/><rect x="4" y="0" width="1" height="1" fill="#a0a0a0"/><rect x="6" y="0" width="1" height="1" fill="#a0a0a0"/><rect x="8" y="0" width="1" height="1" fill="#a0a0a0"/><rect x="10" y="0" width="1" height="1" fill="#a0a0a0"/></svg>
<div style="position:absolute;left:49.00px;top:297.86px;font-size:11px;line-height:12.65px;color:#3399ff;font-weight:700;white-space:nowrap;letter-spacing:0.233px;">Samples</div>
<svg style="position:absolute;left:16px;top:320px;" width="11" height="1" viewBox="0 0 11 1" shape-rendering="crispEdges"><rect x="0" y="0" width="1" height="1" fill="#a0a0a0"/><rect x="2" y="0" width="1" height="1" fill="#a0a0a0"/><rect x="4" y="0" width="1" height="1" fill="#a0a0a0"/><rect x="6" y="0" width="1" height="1" fill="#a0a0a0"/><rect x="8" y="0" width="1" height="1" fill="#a0a0a0"/><rect x="10" y="0" width="1" height="1" fill="#a0a0a0"/></svg>
<div style="position:absolute;left:12px;top:316px;width:9px;height:9px;border:1px solid #919191;background:#fff;"></div>
<div style="position:absolute;left:14px;top:320px;width:5px;height:1px;background:#000;"></div>
<div style="position:absolute;left:16px;top:318px;width:1px;height:5px;background:#000;"></div>
<div style="position:absolute;left:48.40px;top:313.86px;font-size:11px;line-height:12.65px;color:#3399ff;font-weight:700;white-space:nowrap;letter-spacing:0.407px;">Tests/Documents</div>
<svg style="position:absolute;left:16px;top:336px;" width="11" height="1" viewBox="0 0 11 1" shape-rendering="crispEdges"><rect x="0" y="0" width="1" height="1" fill="#a0a0a0"/><rect x="2" y="0" width="1" height="1" fill="#a0a0a0"/><rect x="4" y="0" width="1" height="1" fill="#a0a0a0"/><rect x="6" y="0" width="1" height="1" fill="#a0a0a0"/><rect x="8" y="0" width="1" height="1" fill="#a0a0a0"/><rect x="10" y="0" width="1" height="1" fill="#a0a0a0"/></svg>
<div style="position:absolute;left:12px;top:332px;width:9px;height:9px;border:1px solid #919191;background:#fff;"></div>
<div style="position:absolute;left:14px;top:336px;width:5px;height:1px;background:#000;"></div>
<div style="position:absolute;left:16px;top:334px;width:1px;height:5px;background:#000;"></div>
<div style="position:absolute;left:48.10px;top:329.86px;font-size:11px;line-height:12.65px;color:#3399ff;font-weight:700;white-space:nowrap;letter-spacing:-0.083px;">Billing</div>
<svg style="position:absolute;left:16px;top:352px;" width="11" height="1" viewBox="0 0 11 1" shape-rendering="crispEdges"><rect x="0" y="0" width="1" height="1" fill="#a0a0a0"/><rect x="2" y="0" width="1" height="1" fill="#a0a0a0"/><rect x="4" y="0" width="1" height="1" fill="#a0a0a0"/><rect x="6" y="0" width="1" height="1" fill="#a0a0a0"/><rect x="8" y="0" width="1" height="1" fill="#a0a0a0"/><rect x="10" y="0" width="1" height="1" fill="#a0a0a0"/></svg>
<div style="position:absolute;left:12px;top:348px;width:9px;height:9px;border:1px solid #919191;background:#fff;"></div>
<div style="position:absolute;left:14px;top:352px;width:5px;height:1px;background:#000;"></div>
<div style="position:absolute;left:16px;top:350px;width:1px;height:5px;background:#000;"></div>
<div style="position:absolute;left:48.10px;top:345.86px;font-size:11px;line-height:12.65px;color:#3399ff;font-weight:700;white-space:nowrap;letter-spacing:0.212px;">Equipment</div>
<svg style="position:absolute;left:16px;top:368px;" width="11" height="1" viewBox="0 0 11 1" shape-rendering="crispEdges"><rect x="0" y="0" width="1" height="1" fill="#a0a0a0"/><rect x="2" y="0" width="1" height="1" fill="#a0a0a0"/><rect x="4" y="0" width="1" height="1" fill="#a0a0a0"/><rect x="6" y="0" width="1" height="1" fill="#a0a0a0"/><rect x="8" y="0" width="1" height="1" fill="#a0a0a0"/><rect x="10" y="0" width="1" height="1" fill="#a0a0a0"/></svg>
<div style="position:absolute;left:12px;top:364px;width:9px;height:9px;border:1px solid #919191;background:#fff;"></div>
<div style="position:absolute;left:14px;top:368px;width:5px;height:1px;background:#000;"></div>
<div style="position:absolute;left:16px;top:366px;width:1px;height:5px;background:#000;"></div>
<div style="position:absolute;left:48.10px;top:361.86px;font-size:11px;line-height:12.65px;color:#3399ff;font-weight:700;white-space:nowrap;letter-spacing:0.325px;">Lists</div>
<svg style="position:absolute;left:16px;top:384px;" width="11" height="1" viewBox="0 0 11 1" shape-rendering="crispEdges"><rect x="0" y="0" width="1" height="1" fill="#a0a0a0"/><rect x="2" y="0" width="1" height="1" fill="#a0a0a0"/><rect x="4" y="0" width="1" height="1" fill="#a0a0a0"/><rect x="6" y="0" width="1" height="1" fill="#a0a0a0"/><rect x="8" y="0" width="1" height="1" fill="#a0a0a0"/><rect x="10" y="0" width="1" height="1" fill="#a0a0a0"/></svg>
<div style="position:absolute;left:12px;top:380px;width:9px;height:9px;border:1px solid #919191;background:#fff;"></div>
<div style="position:absolute;left:14px;top:384px;width:5px;height:1px;background:#000;"></div>
<div style="position:absolute;left:16px;top:382px;width:1px;height:5px;background:#000;"></div>
<div style="position:absolute;left:48.10px;top:377.86px;font-size:11px;line-height:12.65px;color:#3399ff;font-weight:700;white-space:nowrap;letter-spacing:0.260px;">Reports &amp; Charts</div>
<svg style="position:absolute;left:16px;top:400px;" width="11" height="1" viewBox="0 0 11 1" shape-rendering="crispEdges"><rect x="0" y="0" width="1" height="1" fill="#a0a0a0"/><rect x="2" y="0" width="1" height="1" fill="#a0a0a0"/><rect x="4" y="0" width="1" height="1" fill="#a0a0a0"/><rect x="6" y="0" width="1" height="1" fill="#a0a0a0"/><rect x="8" y="0" width="1" height="1" fill="#a0a0a0"/><rect x="10" y="0" width="1" height="1" fill="#a0a0a0"/></svg>
<div style="position:absolute;left:12px;top:396px;width:9px;height:9px;border:1px solid #919191;background:#fff;"></div>
<div style="position:absolute;left:14px;top:400px;width:5px;height:1px;background:#000;"></div>
<div style="position:absolute;left:16px;top:398px;width:1px;height:5px;background:#000;"></div>
<div style="position:absolute;left:49.00px;top:393.86px;font-size:11px;line-height:12.65px;color:#3399ff;font-weight:700;white-space:nowrap;letter-spacing:0.008px;">Specifications</div>
<svg style="position:absolute;left:29px;top:104px;" width="13" height="15" viewBox="0 0 13 15" shape-rendering="crispEdges"><rect x="0.5" y="0.5" width="7" height="10" fill="#fff" stroke="#000"/><rect x="2.5" y="2.5" width="7" height="10" fill="#fff" stroke="#000"/><rect x="4.5" y="4.5" width="7" height="10" fill="#fff" stroke="#000"/><rect x="6" y="6" width="4" height="1" fill="#808080"/><rect x="6" y="8" width="4" height="1" fill="#808080"/><rect x="6" y="10" width="4" height="1" fill="#808080"/><rect x="6" y="12" width="4" height="1" fill="#808080"/></svg>
<svg style="position:absolute;left:29px;top:120px;" width="13" height="15" viewBox="0 0 13 15" shape-rendering="crispEdges"><rect x="0.5" y="0.5" width="7" height="10" fill="#fff" stroke="#000"/><rect x="2.5" y="2.5" width="7" height="10" fill="#fff" stroke="#000"/><rect x="4.5" y="4.5" width="7" height="10" fill="#fff" stroke="#000"/><rect x="6" y="6" width="4" height="1" fill="#808080"/><rect x="6" y="8" width="4" height="1" fill="#808080"/><rect x="6" y="10" width="4" height="1" fill="#808080"/><rect x="6" y="12" width="4" height="1" fill="#808080"/></svg>
<svg style="position:absolute;left:27px;top:137px;" width="14" height="14" viewBox="0 0 14 14" shape-rendering="crispEdges"><rect x="5" y="0" width="7" height="1" fill="#000"/><rect x="4" y="1" width="9" height="1" fill="#000"/><rect x="3" y="2" width="10" height="1" fill="#000"/><rect x="2" y="3" width="7" height="1" fill="#000"/><rect x="9" y="3" width="3" height="1" fill="#fff"/><rect x="12" y="3" width="1" height="1" fill="#000"/><rect x="2" y="4" width="6" height="1" fill="#000"/><rect x="8" y="4" width="3" height="1" fill="#fff"/><rect x="11" y="4" width="2" height="1" fill="#000"/><rect x="2" y="5" width="4" height="1" fill="#000"/><rect x="6" y="5" width="4" height="1" fill="#fff"/><rect x="10" y="5" width="1" height="1" fill="#0000ff"/><rect x="11" y="5" width="1" height="1" fill="#fff"/><rect x="12" y="5" width="1" height="1" fill="#000"/><rect x="2" y="6" width="4" height="1" fill="#000"/><rect x="6" y="6" width="6" height="1" fill="#fff"/><rect x="12" y="6" width="1" height="1" fill="#000"/><rect x="2" y="7" width="5" height="1" fill="#000"/><rect x="7" y="7" width="4" height="1" fill="#fff"/><rect x="11" y="7" width="1" height="1" fill="#000"/><rect x="3" y="8" width="4" height="1" fill="#000"/><rect x="7" y="8" width="4" height="1" fill="#fff"/><rect x="11" y="8" width="1" height="1" fill="#000"/><rect x="3" y="9" width="3" height="1" fill="#000"/><rect x="6" y="9" width="4" height="1" fill="#fff"/><rect x="11" y="9" width="1" height="1" fill="#000"/><rect x="4" y="10" width="1" height="1" fill="#000"/><rect x="5" y="10" width="4" height="1" fill="#fff"/><rect x="9" y="10" width="1" height="1" fill="#000"/><rect x="10" y="10" width="2" height="1" fill="#0000a0"/><rect x="3" y="11" width="2" height="1" fill="#0000a0"/><rect x="5" y="11" width="3" height="1" fill="#fff"/><rect x="8" y="11" width="1" height="1" fill="#000"/><rect x="9" y="11" width="4" height="1" fill="#0000a0"/><rect x="2" y="12" width="6" height="1" fill="#0000a0"/><rect x="8" y="12" width="1" height="1" fill="#fff"/><rect x="9" y="12" width="4" height="1" fill="#0000a0"/><rect x="3" y="13" width="9" height="1" fill="#0000a0"/></svg>
<svg style="position:absolute;left:44px;top:278px;" width="20" height="20" viewBox="0 0 20 20" shape-rendering="crispEdges"><rect x="2" y="2" width="16" height="1" fill="#000080"/><rect x="2" y="3" width="1" height="1" fill="#000080"/><rect x="17" y="3" width="1" height="1" fill="#000080"/><rect x="2" y="4" width="1" height="1" fill="#000080"/><rect x="17" y="4" width="1" height="1" fill="#000080"/><rect x="2" y="5" width="1" height="1" fill="#000080"/><rect x="4" y="5" width="11" height="1" fill="#000080"/><rect x="17" y="5" width="1" height="1" fill="#000080"/><rect x="2" y="6" width="1" height="1" fill="#000080"/><rect x="4" y="6" width="11" height="1" fill="#000080"/><rect x="17" y="6" width="1" height="1" fill="#000080"/><rect x="2" y="7" width="1" height="1" fill="#000080"/><rect x="7" y="7" width="1" height="1" fill="#000080"/><rect x="17" y="7" width="1" height="1" fill="#000080"/><rect x="2" y="8" width="1" height="1" fill="#000080"/><rect x="7" y="8" width="8" height="1" fill="#000080"/><rect x="17" y="8" width="1" height="1" fill="#000080"/><rect x="2" y="9" width="1" height="1" fill="#000080"/><rect x="7" y="9" width="1" height="1" fill="#000080"/><rect x="17" y="9" width="1" height="1" fill="#000080"/><rect x="2" y="10" width="1" height="1" fill="#000080"/><rect x="7" y="10" width="8" height="1" fill="#000080"/><rect x="17" y="10" width="1" height="1" fill="#000080"/><rect x="2" y="11" width="1" height="1" fill="#000080"/><rect x="7" y="11" width="1" height="1" fill="#000080"/><rect x="17" y="11" width="1" height="1" fill="#000080"/><rect x="2" y="12" width="1" height="1" fill="#000080"/><rect x="7" y="12" width="8" height="1" fill="#000080"/><rect x="17" y="12" width="1" height="1" fill="#000080"/><rect x="2" y="13" width="1" height="1" fill="#000080"/><rect x="7" y="13" width="1" height="1" fill="#000080"/><rect x="17" y="13" width="1" height="1" fill="#000080"/><rect x="2" y="14" width="1" height="1" fill="#000080"/><rect x="7" y="14" width="8" height="1" fill="#000080"/><rect x="17" y="14" width="1" height="1" fill="#000080"/><rect x="2" y="15" width="1" height="1" fill="#000080"/><rect x="17" y="15" width="1" height="1" fill="#000080"/><rect x="2" y="16" width="1" height="1" fill="#000080"/><rect x="17" y="16" width="1" height="1" fill="#000080"/><rect x="2" y="17" width="16" height="1" fill="#000080"/></svg>
<svg style="position:absolute;left:25px;top:294px;" width="20" height="20" viewBox="0 0 20 20" shape-rendering="crispEdges"><rect x="6" y="2" width="3" height="1" fill="#000"/><rect x="13" y="2" width="3" height="1" fill="#7c7c7c"/><rect x="4" y="3" width="2" height="1" fill="#000"/><rect x="6" y="3" width="1" height="1" fill="#5a0800"/><rect x="7" y="3" width="1" height="1" fill="#e86818"/><rect x="8" y="3" width="2" height="1" fill="#5a0800"/><rect x="10" y="3" width="2" height="1" fill="#000"/><rect x="12" y="3" width="1" height="1" fill="#7c7c7c"/><rect x="13" y="3" width="4" height="1" fill="#b8b8b8"/><rect x="3" y="4" width="2" height="1" fill="#000"/><rect x="5" y="4" width="1" height="1" fill="#5a0800"/><rect x="6" y="4" width="1" height="1" fill="#e86818"/><rect x="7" y="4" width="1" height="1" fill="#000"/><rect x="8" y="4" width="2" height="1" fill="#5a0800"/><rect x="10" y="4" width="2" height="1" fill="#000"/><rect x="12" y="4" width="2" height="1" fill="#b8b8b8"/><rect x="14" y="4" width="1" height="1" fill="#f0f0f0"/><rect x="15" y="4" width="3" height="1" fill="#7c7c7c"/><rect x="2" y="5" width="2" height="1" fill="#000"/><rect x="4" y="5" width="6" height="1" fill="#5a0800"/><rect x="10" y="5" width="1" height="1" fill="#000"/><rect x="11" y="5" width="2" height="1" fill="#7c7c7c"/><rect x="13" y="5" width="4" height="1" fill="#b8b8b8"/><rect x="17" y="5" width="1" height="1" fill="#7c7c7c"/><rect x="2" y="6" width="2" height="1" fill="#000"/><rect x="4" y="6" width="2" height="1" fill="#585858"/><rect x="6" y="6" width="4" height="1" fill="#000"/><rect x="10" y="6" width="2" height="1" fill="#000"/><rect x="12" y="6" width="2" height="1" fill="#f0a828"/><rect x="14" y="6" width="2" height="1" fill="#e86818"/><rect x="16" y="6" width="2" height="1" fill="#000"/><rect x="3" y="7" width="1" height="1" fill="#000"/><rect x="4" y="7" width="4" height="1" fill="#585858"/><rect x="8" y="7" width="2" height="1" fill="#000"/><rect x="10" y="7" width="2" height="1" fill="#e86818"/><rect x="12" y="7" width="3" height="1" fill="#f0a828"/><rect x="15" y="7" width="2" height="1" fill="#e86818"/><rect x="17" y="7" width="1" height="1" fill="#000"/><rect x="3" y="8" width="1" height="1" fill="#000"/><rect x="4" y="8" width="1" height="1" fill="#585858"/><rect x="5" y="8" width="2" height="1" fill="#7c7c7c"/><rect x="7" y="8" width="2" height="1" fill="#000"/><rect x="9" y="8" width="2" height="1" fill="#e86818"/><rect x="11" y="8" width="3" height="1" fill="#f0a828"/><rect x="14" y="8" width="3" height="1" fill="#e86818"/><rect x="17" y="8" width="1" height="1" fill="#000"/><rect x="3" y="9" width="2" height="1" fill="#000"/><rect x="5" y="9" width="2" height="1" fill="#585858"/><rect x="7" y="9" width="1" height="1" fill="#000"/><rect x="8" y="9" width="1" height="1" fill="#585858"/><rect x="9" y="9" width="3" height="1" fill="#e86818"/><rect x="12" y="9" width="4" height="1" fill="#f0a828"/><rect x="16" y="9" width="2" height="1" fill="#000"/><rect x="4" y="10" width="1" height="1" fill="#000"/><rect x="5" y="10" width="3" height="1" fill="#585858"/><rect x="8" y="10" width="3" height="1" fill="#000"/><rect x="11" y="10" width="4" height="1" fill="#e86818"/><rect x="15" y="10" width="2" height="1" fill="#000"/><rect x="4" y="11" width="1" height="1" fill="#000"/><rect x="5" y="11" width="3" height="1" fill="#7c7c7c"/><rect x="8" y="11" width="2" height="1" fill="#000"/><rect x="10" y="11" width="6" height="1" fill="#585858"/><rect x="16" y="11" width="1" height="1" fill="#000"/><rect x="5" y="12" width="1" height="1" fill="#000"/><rect x="6" y="12" width="2" height="1" fill="#b8b8b8"/><rect x="8" y="12" width="2" height="1" fill="#000"/><rect x="10" y="12" width="2" height="1" fill="#7c7c7c"/><rect x="12" y="12" width="2" height="1" fill="#b8b8b8"/><rect x="14" y="12" width="2" height="1" fill="#7c7c7c"/><rect x="16" y="12" width="1" height="1" fill="#000"/><rect x="5" y="13" width="5" height="1" fill="#000"/><rect x="10" y="13" width="5" height="1" fill="#7c7c7c"/><rect x="15" y="13" width="1" height="1" fill="#000"/><rect x="9" y="14" width="2" height="1" fill="#000"/><rect x="11" y="14" width="4" height="1" fill="#585858"/><rect x="15" y="14" width="1" height="1" fill="#000"/><rect x="10" y="15" width="1" height="1" fill="#000"/><rect x="11" y="15" width="3" height="1" fill="#b8b8b8"/><rect x="14" y="15" width="1" height="1" fill="#000"/><rect x="10" y="16" width="4" height="1" fill="#000"/></svg>
<svg style="position:absolute;left:25px;top:310px;" width="20" height="20" viewBox="0 0 20 20" shape-rendering="crispEdges"><rect x="4" y="2" width="5" height="1" fill="#808080"/><rect x="3" y="3" width="1" height="1" fill="#808080"/><rect x="4" y="3" width="6" height="1" fill="#f4f450"/><rect x="2" y="4" width="1" height="1" fill="#808080"/><rect x="3" y="4" width="7" height="1" fill="#f4f450"/><rect x="10" y="4" width="6" height="1" fill="#808080"/><rect x="2" y="5" width="1" height="1" fill="#808080"/><rect x="3" y="5" width="13" height="1" fill="#fff"/><rect x="16" y="5" width="1" height="1" fill="#000"/><rect x="2" y="6" width="1" height="1" fill="#808080"/><rect x="3" y="6" width="1" height="1" fill="#fff"/><rect x="4" y="6" width="2" height="1" fill="#f4f450"/><rect x="6" y="6" width="4" height="1" fill="#000"/><rect x="10" y="6" width="6" height="1" fill="#f4f450"/><rect x="16" y="6" width="1" height="1" fill="#000"/><rect x="2" y="7" width="1" height="1" fill="#808080"/><rect x="3" y="7" width="2" height="1" fill="#fff"/><rect x="5" y="7" width="1" height="1" fill="#808080"/><rect x="6" y="7" width="4" height="1" fill="#00f0f0"/><rect x="10" y="7" width="1" height="1" fill="#000"/><rect x="11" y="7" width="5" height="1" fill="#f4f450"/><rect x="16" y="7" width="1" height="1" fill="#000"/><rect x="2" y="8" width="1" height="1" fill="#808080"/><rect x="3" y="8" width="1" height="1" fill="#fff"/><rect x="4" y="8" width="1" height="1" fill="#808080"/><rect x="5" y="8" width="2" height="1" fill="#00f0f0"/><rect x="7" y="8" width="1" height="1" fill="#fff"/><rect x="8" y="8" width="2" height="1" fill="#00f0f0"/><rect x="10" y="8" width="1" height="1" fill="#000"/><rect x="11" y="8" width="5" height="1" fill="#f4f450"/><rect x="16" y="8" width="1" height="1" fill="#000"/><rect x="2" y="9" width="1" height="1" fill="#808080"/><rect x="3" y="9" width="1" height="1" fill="#f4f450"/><rect x="4" y="9" width="1" height="1" fill="#808080"/><rect x="5" y="9" width="5" height="1" fill="#00f0f0"/><rect x="10" y="9" width="1" height="1" fill="#000"/><rect x="11" y="9" width="5" height="1" fill="#f4f450"/><rect x="16" y="9" width="1" height="1" fill="#000"/><rect x="1" y="10" width="2" height="1" fill="#808080"/><rect x="3" y="10" width="1" height="1" fill="#fff"/><rect x="4" y="10" width="1" height="1" fill="#808080"/><rect x="5" y="10" width="3" height="1" fill="#00f0f0"/><rect x="8" y="10" width="1" height="1" fill="#fff"/><rect x="9" y="10" width="1" height="1" fill="#00f0f0"/><rect x="10" y="10" width="1" height="1" fill="#000"/><rect x="11" y="10" width="5" height="1" fill="#f4f450"/><rect x="16" y="10" width="1" height="1" fill="#000"/><rect x="2" y="11" width="1" height="1" fill="#808080"/><rect x="3" y="11" width="1" height="1" fill="#f4f450"/><rect x="4" y="11" width="1" height="1" fill="#808080"/><rect x="5" y="11" width="5" height="1" fill="#00f0f0"/><rect x="10" y="11" width="1" height="1" fill="#000"/><rect x="11" y="11" width="5" height="1" fill="#f4f450"/><rect x="16" y="11" width="1" height="1" fill="#000"/><rect x="2" y="12" width="1" height="1" fill="#808080"/><rect x="3" y="12" width="2" height="1" fill="#f4f450"/><rect x="5" y="12" width="1" height="1" fill="#808080"/><rect x="6" y="12" width="4" height="1" fill="#000"/><rect x="10" y="12" width="2" height="1" fill="#000"/><rect x="12" y="12" width="4" height="1" fill="#f4f450"/><rect x="16" y="12" width="1" height="1" fill="#000"/><rect x="3" y="13" width="7" height="1" fill="#808000"/><rect x="10" y="13" width="1" height="1" fill="#000"/><rect x="11" y="13" width="2" height="1" fill="#0000ff"/><rect x="13" y="13" width="3" height="1" fill="#808000"/><rect x="16" y="13" width="1" height="1" fill="#000"/><rect x="3" y="14" width="8" height="1" fill="#000"/><rect x="11" y="14" width="1" height="1" fill="#000"/><rect x="12" y="14" width="1" height="1" fill="#00f0f0"/><rect x="13" y="14" width="1" height="1" fill="#0000ff"/><rect x="14" y="14" width="1" height="1" fill="#000"/><rect x="12" y="15" width="1" height="1" fill="#000"/><rect x="13" y="15" width="1" height="1" fill="#00f0f0"/><rect x="14" y="15" width="2" height="1" fill="#0000ff"/><rect x="16" y="15" width="1" height="1" fill="#000"/><rect x="13" y="16" width="1" height="1" fill="#000"/><rect x="14" y="16" width="1" height="1" fill="#00f0f0"/><rect x="15" y="16" width="1" height="1" fill="#0000ff"/><rect x="16" y="16" width="1" height="1" fill="#000"/><rect x="14" y="17" width="2" height="1" fill="#000"/></svg>
<svg style="position:absolute;left:25px;top:326px;" width="20" height="20" viewBox="0 0 20 20" shape-rendering="crispEdges"><rect x="9" y="2" width="1" height="1" fill="#0000ff"/><rect x="7" y="3" width="5" height="1" fill="#0000ff"/><rect x="6" y="4" width="7" height="1" fill="#0000ff"/><rect x="6" y="5" width="2" height="1" fill="#0000ff"/><rect x="9" y="5" width="1" height="1" fill="#0000ff"/><rect x="11" y="5" width="2" height="1" fill="#0000ff"/><rect x="6" y="6" width="2" height="1" fill="#0000ff"/><rect x="9" y="6" width="1" height="1" fill="#0000ff"/><rect x="6" y="7" width="4" height="1" fill="#0000ff"/><rect x="7" y="8" width="5" height="1" fill="#0000ff"/><rect x="9" y="9" width="4" height="1" fill="#0000ff"/><rect x="9" y="10" width="1" height="1" fill="#0000ff"/><rect x="11" y="10" width="2" height="1" fill="#0000ff"/><rect x="6" y="11" width="2" height="1" fill="#0000ff"/><rect x="9" y="11" width="1" height="1" fill="#0000ff"/><rect x="11" y="11" width="2" height="1" fill="#0000ff"/><rect x="6" y="12" width="7" height="1" fill="#0000ff"/><rect x="7" y="13" width="5" height="1" fill="#0000ff"/><rect x="9" y="14" width="1" height="1" fill="#0000ff"/><rect x="9" y="15" width="1" height="1" fill="#0000ff"/></svg>
<svg style="position:absolute;left:25px;top:342px;" width="20" height="20" viewBox="0 0 20 20" shape-rendering="crispEdges"><rect x="10" y="2" width="6" height="1" fill="#000"/><rect x="9" y="3" width="1" height="1" fill="#000"/><rect x="10" y="3" width="5" height="1" fill="#fff"/><rect x="15" y="3" width="1" height="1" fill="#000"/><rect x="8" y="4" width="1" height="1" fill="#000"/><rect x="9" y="4" width="2" height="1" fill="#fff"/><rect x="11" y="4" width="4" height="1" fill="#000"/><rect x="7" y="5" width="1" height="1" fill="#000"/><rect x="8" y="5" width="2" height="1" fill="#fff"/><rect x="10" y="5" width="1" height="1" fill="#000"/><rect x="11" y="5" width="4" height="1" fill="#fff"/><rect x="16" y="5" width="2" height="1" fill="#000"/><rect x="7" y="6" width="1" height="1" fill="#000"/><rect x="8" y="6" width="2" height="1" fill="#fff"/><rect x="10" y="6" width="1" height="1" fill="#000"/><rect x="11" y="6" width="4" height="1" fill="#fff"/><rect x="15" y="6" width="1" height="1" fill="#000"/><rect x="16" y="6" width="1" height="1" fill="#fff"/><rect x="17" y="6" width="1" height="1" fill="#000"/><rect x="7" y="7" width="1" height="1" fill="#000"/><rect x="8" y="7" width="2" height="1" fill="#fff"/><rect x="10" y="7" width="1" height="1" fill="#000"/><rect x="11" y="7" width="3" height="1" fill="#fff"/><rect x="14" y="7" width="1" height="1" fill="#000"/><rect x="15" y="7" width="2" height="1" fill="#fff"/><rect x="17" y="7" width="1" height="1" fill="#000"/><rect x="7" y="8" width="1" height="1" fill="#000"/><rect x="8" y="8" width="2" height="1" fill="#fff"/><rect x="10" y="8" width="1" height="1" fill="#000"/><rect x="11" y="8" width="3" height="1" fill="#fff"/><rect x="14" y="8" width="1" height="1" fill="#000"/><rect x="15" y="8" width="2" height="1" fill="#fff"/><rect x="17" y="8" width="1" height="1" fill="#000"/><rect x="7" y="9" width="1" height="1" fill="#000"/><rect x="8" y="9" width="2" height="1" fill="#fff"/><rect x="10" y="9" width="4" height="1" fill="#000"/><rect x="14" y="9" width="3" height="1" fill="#fff"/><rect x="17" y="9" width="1" height="1" fill="#000"/><rect x="6" y="10" width="1" height="1" fill="#000"/><rect x="7" y="10" width="2" height="1" fill="#b8b8b8"/><rect x="9" y="10" width="7" height="1" fill="#fff"/><rect x="16" y="10" width="1" height="1" fill="#000"/><rect x="5" y="11" width="1" height="1" fill="#000"/><rect x="6" y="11" width="3" height="1" fill="#b8b8b8"/><rect x="9" y="11" width="2" height="1" fill="#585858"/><rect x="11" y="11" width="4" height="1" fill="#fff"/><rect x="15" y="11" width="1" height="1" fill="#000"/><rect x="4" y="12" width="1" height="1" fill="#000"/><rect x="5" y="12" width="2" height="1" fill="#b8b8b8"/><rect x="7" y="12" width="3" height="1" fill="#585858"/><rect x="10" y="12" width="1" height="1" fill="#000"/><rect x="11" y="12" width="4" height="1" fill="#000"/><rect x="3" y="13" width="1" height="1" fill="#000"/><rect x="4" y="13" width="2" height="1" fill="#b8b8b8"/><rect x="6" y="13" width="3" height="1" fill="#585858"/><rect x="9" y="13" width="1" height="1" fill="#000"/><rect x="2" y="14" width="1" height="1" fill="#000"/><rect x="3" y="14" width="2" height="1" fill="#b8b8b8"/><rect x="5" y="14" width="3" height="1" fill="#585858"/><rect x="8" y="14" width="1" height="1" fill="#000"/><rect x="2" y="15" width="2" height="1" fill="#b8b8b8"/><rect x="4" y="15" width="3" height="1" fill="#585858"/><rect x="7" y="15" width="1" height="1" fill="#000"/><rect x="2" y="16" width="1" height="1" fill="#b8b8b8"/><rect x="3" y="16" width="3" height="1" fill="#585858"/><rect x="6" y="16" width="1" height="1" fill="#000"/><rect x="2" y="17" width="3" height="1" fill="#b8b8b8"/><rect x="5" y="17" width="1" height="1" fill="#000"/></svg>
<svg style="position:absolute;left:29px;top:360px;" width="13" height="15" viewBox="0 0 13 15" shape-rendering="crispEdges"><rect x="0.5" y="0.5" width="7" height="10" fill="#fff" stroke="#000"/><rect x="2.5" y="2.5" width="7" height="10" fill="#fff" stroke="#000"/><rect x="4.5" y="4.5" width="7" height="10" fill="#fff" stroke="#000"/><rect x="6" y="6" width="4" height="1" fill="#808080"/><rect x="6" y="8" width="4" height="1" fill="#808080"/><rect x="6" y="10" width="4" height="1" fill="#808080"/><rect x="6" y="12" width="4" height="1" fill="#808080"/></svg>
<svg style="position:absolute;left:25px;top:372px;" width="20" height="20" viewBox="0 0 20 20" shape-rendering="crispEdges"><rect x="2" y="4" width="1" height="1" fill="#000"/><rect x="2" y="5" width="1" height="1" fill="#000"/><rect x="4" y="5" width="7" height="1" fill="#c000c0"/><rect x="11" y="5" width="1" height="1" fill="#c000c0"/><rect x="2" y="6" width="1" height="1" fill="#000"/><rect x="3" y="6" width="1" height="1" fill="#c000c0"/><rect x="2" y="7" width="1" height="1" fill="#000"/><rect x="9" y="7" width="1" height="1" fill="#ff0000"/><rect x="11" y="7" width="1" height="1" fill="#ff0000"/><rect x="2" y="8" width="1" height="1" fill="#000"/><rect x="3" y="8" width="1" height="1" fill="#ff0000"/><rect x="5" y="8" width="1" height="1" fill="#ff0000"/><rect x="7" y="8" width="1" height="1" fill="#ff0000"/><rect x="9" y="8" width="9" height="1" fill="#0000c0"/><rect x="2" y="9" width="1" height="1" fill="#000"/><rect x="9" y="9" width="1" height="1" fill="#0000c0"/><rect x="10" y="9" width="7" height="1" fill="#fff"/><rect x="17" y="9" width="1" height="1" fill="#0000c0"/><rect x="2" y="10" width="1" height="1" fill="#000"/><rect x="3" y="10" width="1" height="1" fill="#00c000"/><rect x="8" y="10" width="1" height="1" fill="#00c000"/><rect x="9" y="10" width="1" height="1" fill="#0000c0"/><rect x="10" y="10" width="1" height="1" fill="#fff"/><rect x="11" y="10" width="5" height="1" fill="#0000c0"/><rect x="16" y="10" width="1" height="1" fill="#fff"/><rect x="17" y="10" width="1" height="1" fill="#0000c0"/><rect x="2" y="11" width="1" height="1" fill="#000"/><rect x="4" y="11" width="4" height="1" fill="#00c000"/><rect x="9" y="11" width="1" height="1" fill="#0000c0"/><rect x="10" y="11" width="7" height="1" fill="#fff"/><rect x="17" y="11" width="1" height="1" fill="#0000c0"/><rect x="2" y="12" width="1" height="1" fill="#000"/><rect x="9" y="12" width="1" height="1" fill="#0000c0"/><rect x="10" y="12" width="1" height="1" fill="#fff"/><rect x="11" y="12" width="5" height="1" fill="#0000c0"/><rect x="16" y="12" width="1" height="1" fill="#fff"/><rect x="17" y="12" width="1" height="1" fill="#0000c0"/><rect x="2" y="13" width="7" height="1" fill="#000"/><rect x="9" y="13" width="1" height="1" fill="#0000c0"/><rect x="10" y="13" width="7" height="1" fill="#fff"/><rect x="17" y="13" width="1" height="1" fill="#0000c0"/><rect x="9" y="14" width="1" height="1" fill="#0000c0"/><rect x="10" y="14" width="1" height="1" fill="#fff"/><rect x="11" y="14" width="5" height="1" fill="#0000c0"/><rect x="16" y="14" width="1" height="1" fill="#fff"/><rect x="17" y="14" width="1" height="1" fill="#0000c0"/><rect x="9" y="15" width="1" height="1" fill="#0000c0"/><rect x="10" y="15" width="7" height="1" fill="#fff"/><rect x="17" y="15" width="1" height="1" fill="#0000c0"/><rect x="9" y="16" width="1" height="1" fill="#0000c0"/><rect x="10" y="16" width="1" height="1" fill="#fff"/><rect x="11" y="16" width="5" height="1" fill="#0000c0"/><rect x="16" y="16" width="1" height="1" fill="#fff"/><rect x="17" y="16" width="1" height="1" fill="#0000c0"/><rect x="9" y="17" width="1" height="1" fill="#0000c0"/><rect x="10" y="17" width="7" height="1" fill="#fff"/><rect x="17" y="17" width="1" height="1" fill="#0000c0"/><rect x="9" y="18" width="1" height="1" fill="#0000c0"/><rect x="10" y="18" width="7" height="1" fill="#fff"/><rect x="17" y="18" width="1" height="1" fill="#0000c0"/><rect x="9" y="19" width="9" height="1" fill="#0000c0"/></svg>
<svg style="position:absolute;left:25px;top:390px;" width="20" height="20" viewBox="0 0 20 20" shape-rendering="crispEdges"><rect x="3" y="2" width="7" height="1" fill="#404040"/><rect x="3" y="3" width="1" height="1" fill="#404040"/><rect x="4" y="3" width="5" height="1" fill="#fff"/><rect x="9" y="3" width="1" height="1" fill="#404040"/><rect x="3" y="4" width="1" height="1" fill="#404040"/><rect x="4" y="4" width="2" height="1" fill="#fff"/><rect x="6" y="4" width="1" height="1" fill="#007000"/><rect x="7" y="4" width="2" height="1" fill="#fff"/><rect x="9" y="4" width="1" height="1" fill="#404040"/><rect x="3" y="5" width="1" height="1" fill="#404040"/><rect x="4" y="5" width="1" height="1" fill="#fff"/><rect x="5" y="5" width="1" height="1" fill="#007000"/><rect x="6" y="5" width="7" height="1" fill="#404040"/><rect x="3" y="6" width="1" height="1" fill="#404040"/><rect x="4" y="6" width="2" height="1" fill="#fff"/><rect x="6" y="6" width="1" height="1" fill="#404040"/><rect x="7" y="6" width="5" height="1" fill="#fff"/><rect x="12" y="6" width="1" height="1" fill="#404040"/><rect x="3" y="7" width="1" height="1" fill="#404040"/><rect x="4" y="7" width="2" height="1" fill="#fff"/><rect x="6" y="7" width="1" height="1" fill="#404040"/><rect x="7" y="7" width="2" height="1" fill="#fff"/><rect x="9" y="7" width="1" height="1" fill="#007000"/><rect x="10" y="7" width="2" height="1" fill="#fff"/><rect x="12" y="7" width="1" height="1" fill="#404040"/><rect x="3" y="8" width="1" height="1" fill="#404040"/><rect x="5" y="8" width="1" height="1" fill="#007000"/><rect x="6" y="8" width="1" height="1" fill="#404040"/><rect x="7" y="8" width="1" height="1" fill="#fff"/><rect x="8" y="8" width="1" height="1" fill="#007000"/><rect x="9" y="8" width="7" height="1" fill="#404040"/><rect x="3" y="9" width="1" height="1" fill="#404040"/><rect x="4" y="9" width="2" height="1" fill="#fff"/><rect x="6" y="9" width="1" height="1" fill="#404040"/><rect x="7" y="9" width="2" height="1" fill="#fff"/><rect x="9" y="9" width="1" height="1" fill="#404040"/><rect x="10" y="9" width="5" height="1" fill="#fff"/><rect x="15" y="9" width="1" height="1" fill="#404040"/><rect x="3" y="10" width="4" height="1" fill="#404040"/><rect x="7" y="10" width="2" height="1" fill="#fff"/><rect x="9" y="10" width="1" height="1" fill="#404040"/><rect x="10" y="10" width="5" height="1" fill="#fff"/><rect x="15" y="10" width="1" height="1" fill="#404040"/><rect x="6" y="11" width="1" height="1" fill="#404040"/><rect x="7" y="11" width="1" height="1" fill="#fff"/><rect x="8" y="11" width="1" height="1" fill="#007000"/><rect x="9" y="11" width="1" height="1" fill="#404040"/><rect x="10" y="11" width="1" height="1" fill="#fff"/><rect x="11" y="11" width="3" height="1" fill="#007000"/><rect x="14" y="11" width="1" height="1" fill="#fff"/><rect x="15" y="11" width="1" height="1" fill="#404040"/><rect x="6" y="12" width="1" height="1" fill="#404040"/><rect x="7" y="12" width="2" height="1" fill="#fff"/><rect x="9" y="12" width="1" height="1" fill="#404040"/><rect x="10" y="12" width="2" height="1" fill="#fff"/><rect x="12" y="12" width="1" height="1" fill="#007000"/><rect x="13" y="12" width="2" height="1" fill="#fff"/><rect x="15" y="12" width="1" height="1" fill="#404040"/><rect x="6" y="13" width="4" height="1" fill="#404040"/><rect x="10" y="13" width="5" height="1" fill="#fff"/><rect x="15" y="13" width="1" height="1" fill="#404040"/><rect x="9" y="14" width="1" height="1" fill="#404040"/><rect x="10" y="14" width="1" height="1" fill="#fff"/><rect x="11" y="14" width="3" height="1" fill="#007000"/><rect x="14" y="14" width="1" height="1" fill="#fff"/><rect x="15" y="14" width="1" height="1" fill="#404040"/><rect x="16" y="14" width="1" height="1" fill="#b8b8b8"/><rect x="9" y="15" width="1" height="1" fill="#404040"/><rect x="10" y="15" width="5" height="1" fill="#fff"/><rect x="15" y="15" width="1" height="1" fill="#404040"/><rect x="16" y="15" width="1" height="1" fill="#b8b8b8"/><rect x="9" y="16" width="7" height="1" fill="#404040"/><rect x="16" y="16" width="1" height="1" fill="#b8b8b8"/><rect x="10" y="17" width="7" height="1" fill="#b8b8b8"/></svg>
<div style="position:absolute;left:8px;top:515px;width:227px;height:15px;background:linear-gradient(90deg,#efefef 0px,#e9e9e9 18px,#e9e9e9 209px,#efefef 217px);"></div>
<svg style="position:absolute;left:14px;top:519px;" width="5" height="8" viewBox="0 0 5 8"><defs><linearGradient id="la" x1="0.3" y1="0" x2="0.7" y2="1"><stop offset="0" stop-color="#111"/><stop offset="1" stop-color="#999"/></linearGradient></defs><path d="M4.5 0 L0 4 L4.5 8 Z" fill="url(#la)"/></svg>
<svg style="position:absolute;left:225px;top:519px;" width="5" height="8" viewBox="0 0 5 8"><defs><linearGradient id="ra" x1="0" y1="0.2" x2="1" y2="0.8"><stop offset="0" stop-color="#111"/><stop offset="1" stop-color="#999"/></linearGradient></defs><path d="M0.5 0 L5 4 L0.5 8 Z" fill="url(#ra)"/></svg>
<div style="position:absolute;left:26px;top:515px;width:181px;height:15px;border:1px solid #959595;border-radius:2px;background:linear-gradient(180deg,#f6f6f6 0%,#ececec 45%,#dadadd 50%,#cfd0d4 100%);box-shadow:inset 0 0 0 1px rgba(255,255,255,.6);"></div>
<div style="position:absolute;left:112px;top:519px;width:3px;height:7px;background:linear-gradient(180deg,#202020,#909090);border-right:1px solid #f8f8f8;"></div>
<div style="position:absolute;left:115px;top:519px;width:3px;height:7px;background:linear-gradient(180deg,#202020,#909090);border-right:1px solid #f8f8f8;"></div>
<div style="position:absolute;left:118px;top:519px;width:3px;height:7px;background:linear-gradient(180deg,#202020,#909090);border-right:1px solid #f8f8f8;"></div>
<div style="position:absolute;left:239px;top:76px;width:754px;height:724px;background:#fff;border-left:1px solid #696969;border-bottom:1px solid #696969;"></div>
<div style="position:absolute;left:8px;top:799px;width:228px;height:1px;background:#696969;"></div>
<div style="position:absolute;left:12px;top:539px;width:13px;height:22px;background:#f0f0f0;border-top:1px solid #e3e3e3;border-left:1px solid #e3e3e3;border-bottom:1px solid #696969;border-right:1px solid #696969;box-shadow:inset 1px 1px 0 #fff, inset -1px -1px 0 #a0a0a0;"></div>
<svg style="position:absolute;left:15px;top:546px;" width="5" height="3" viewBox="0 0 5 3" shape-rendering="crispEdges"><rect x="2" y="0" width="1" height="1" fill="#000"/><rect x="1" y="1" width="3" height="1" fill="#000"/><rect x="0" y="2" width="5" height="1" fill="#000"/></svg>
<div style="position:absolute;left:25px;top:539px;width:161px;height:21px;background:#fff;border-top:1px solid #a0a0a0;border-left:1px solid #a0a0a0;border-bottom:1px solid #fff;border-right:1px solid #fff;box-shadow:inset 1px 1px 0 #696969, inset -1px -1px 0 #e3e3e3;"></div>
<div style="position:absolute;left:169px;top:541px;width:17px;height:17px;background:#f0f0f0;border-top:1px solid #e3e3e3;border-left:1px solid #e3e3e3;border-bottom:1px solid #696969;border-right:1px solid #696969;box-shadow:inset 1px 1px 0 #fff, inset -1px -1px 0 #a0a0a0;"></div>
<svg style="position:absolute;left:174px;top:548px;" width="7" height="4" viewBox="0 0 7 4" shape-rendering="crispEdges"><rect x="0" y="0" width="7" height="1" fill="#a0a0a0"/><rect x="1" y="1" width="5" height="1" fill="#a0a0a0"/><rect x="2" y="2" width="3" height="1" fill="#a0a0a0"/><rect x="3" y="3" width="1" height="1" fill="#a0a0a0"/></svg>
<div style="position:absolute;left:28.20px;top:543.86px;font-size:11px;line-height:12.65px;color:#808080;font-weight:400;white-space:nowrap;letter-spacing:-0.083px;">Default</div>
<div style="position:absolute;left:188px;top:539px;width:24px;height:22px;background:#f0f0f0;border-top:1px solid #e3e3e3;border-left:1px solid #e3e3e3;border-bottom:1px solid #696969;border-right:1px solid #696969;box-shadow:inset 1px 1px 0 #fff, inset -1px -1px 0 #a0a0a0;"></div>
<svg style="position:absolute;left:191px;top:540px;" width="18" height="18" viewBox="0 0 18 18"><path d="M2.2 14.8 L7.5 9.5" stroke="#c06010" stroke-width="2.8" stroke-linecap="round"/><path d="M2.2 14.8 L7.5 9.5" stroke="#f8b840" stroke-width="1.3"/><circle cx="11" cy="6" r="4.4" fill="#d4f2ff" stroke="#8a96e6" stroke-width="1.1"/><circle cx="12.5" cy="7.5" r="1.1" fill="#fff"/></svg>
<div style="position:absolute;left:212px;top:539px;width:23px;height:22px;background:#f0f0f0;border-top:1px solid #e3e3e3;border-left:1px solid #e3e3e3;border-bottom:1px solid #696969;border-right:1px solid #696969;box-shadow:inset 1px 1px 0 #fff, inset -1px -1px 0 #a0a0a0;"></div>
<svg style="position:absolute;left:214px;top:540px;" width="19" height="18" viewBox="0 0 19 18"><rect x="1.5" y="1.5" width="10" height="10" fill="#fff" stroke="#8a8a8a"/><rect x="3" y="3" width="7" height="1" fill="#888"/><rect x="3" y="5" width="7" height="1" fill="#888"/><rect x="3" y="7" width="7" height="1" fill="#888"/><rect x="3" y="9" width="7" height="1" fill="#888"/><path d="M10.5 16 L11 12 L15 7 L17 7.5 L12.5 14 Z" fill="#fff" stroke="#999" stroke-width="1" stroke-dasharray="1.2 0.8"/><path d="M15 6 L17.5 5.5 L17 8" fill="#999"/><rect x="4" y="15" width="1" height="1" fill="#888"/><rect x="6" y="15" width="1" height="1" fill="#888"/><rect x="8" y="15" width="1" height="1" fill="#888"/></svg>
<div style="position:absolute;left:24.50px;top:571.86px;font-size:11px;line-height:12.65px;color:#000;font-weight:400;white-space:nowrap;letter-spacing:-0.229px;">Search Criteria</div>
<div style="position:absolute;left:97px;top:567px;width:82px;height:21px;background:#fff;border-top:1px solid #a0a0a0;border-left:1px solid #a0a0a0;border-bottom:1px solid #fff;border-right:1px solid #fff;box-shadow:inset 1px 1px 0 #696969, inset -1px -1px 0 #e3e3e3;"></div>
<div style="position:absolute;left:161px;top:569px;width:17px;height:17px;background:#f0f0f0;border-top:1px solid #e3e3e3;border-left:1px solid #e3e3e3;border-bottom:1px solid #696969;border-right:1px solid #696969;box-shadow:inset 1px 1px 0 #fff, inset -1px -1px 0 #a0a0a0;"></div>
<svg style="position:absolute;left:166px;top:576px;" width="7" height="4" viewBox="0 0 7 4" shape-rendering="crispEdges"><rect x="0" y="0" width="7" height="1" fill="#a0a0a0"/><rect x="1" y="1" width="5" height="1" fill="#a0a0a0"/><rect x="2" y="2" width="3" height="1" fill="#a0a0a0"/><rect x="3" y="3" width="1" height="1" fill="#a0a0a0"/></svg>
<div style="position:absolute;left:101.90px;top:570.86px;font-size:11px;line-height:12.65px;color:#808080;font-weight:400;white-space:nowrap;letter-spacing:-0.017px;">Default</div>
<div style="position:absolute;left:183px;top:567px;width:20px;height:20px;background:#f0f0f0;border-top:1px solid #e3e3e3;border-left:1px solid #e3e3e3;border-bottom:1px solid #696969;border-right:1px solid #696969;box-shadow:inset 1px 1px 0 #fff, inset -1px -1px 0 #a0a0a0;"></div>
<svg style="position:absolute;left:182px;top:566px;" width="20" height="20" viewBox="0 0 20 20" shape-rendering="crispEdges"><rect x="17" y="3" width="1" height="1" fill="#a0a0a0"/><rect x="16" y="4" width="2" height="1" fill="#a0a0a0"/><rect x="15" y="5" width="3" height="1" fill="#a0a0a0"/><rect x="14" y="6" width="3" height="1" fill="#a0a0a0"/><rect x="13" y="7" width="4" height="1" fill="#a0a0a0"/><rect x="12" y="8" width="4" height="1" fill="#a0a0a0"/><rect x="11" y="9" width="4" height="1" fill="#a0a0a0"/><rect x="11" y="10" width="3" height="1" fill="#a0a0a0"/><rect x="5" y="11" width="3" height="1" fill="#a0a0a0"/><rect x="10" y="11" width="4" height="1" fill="#a0a0a0"/><rect x="6" y="12" width="7" height="1" fill="#a0a0a0"/><rect x="7" y="13" width="6" height="1" fill="#a0a0a0"/><rect x="8" y="14" width="4" height="1" fill="#a0a0a0"/><rect x="9" y="15" width="3" height="1" fill="#a0a0a0"/><rect x="10" y="16" width="2" height="1" fill="#a0a0a0"/></svg>
<div style="position:absolute;left:205px;top:567px;width:20px;height:20px;background:#f0f0f0;border-top:1px solid #e3e3e3;border-left:1px solid #e3e3e3;border-bottom:1px solid #696969;border-right:1px solid #696969;box-shadow:inset 1px 1px 0 #fff, inset -1px -1px 0 #a0a0a0;"></div>
<svg style="position:absolute;left:204px;top:566px;" width="20" height="20" viewBox="0 0 20 20" shape-rendering="crispEdges"><rect x="4" y="5" width="2" height="1" fill="#a0a0a0"/><rect x="12" y="5" width="4" height="1" fill="#a0a0a0"/><rect x="4" y="6" width="3" height="1" fill="#a0a0a0"/><rect x="11" y="6" width="3" height="1" fill="#a0a0a0"/><rect x="5" y="7" width="3" height="1" fill="#a0a0a0"/><rect x="10" y="7" width="3" height="1" fill="#a0a0a0"/><rect x="6" y="8" width="3" height="1" fill="#a0a0a0"/><rect x="9" y="8" width="3" height="1" fill="#a0a0a0"/><rect x="7" y="9" width="4" height="1" fill="#a0a0a0"/><rect x="8" y="10" width="3" height="1" fill="#a0a0a0"/><rect x="7" y="11" width="5" height="1" fill="#a0a0a0"/><rect x="6" y="12" width="3" height="1" fill="#a0a0a0"/><rect x="10" y="12" width="3" height="1" fill="#a0a0a0"/><rect x="5" y="13" width="3" height="1" fill="#a0a0a0"/><rect x="11" y="13" width="3" height="1" fill="#a0a0a0"/><rect x="4" y="14" width="3" height="1" fill="#a0a0a0"/><rect x="12" y="14" width="3" height="1" fill="#a0a0a0"/><rect x="4" y="15" width="2" height="1" fill="#a0a0a0"/><rect x="13" y="15" width="3" height="1" fill="#a0a0a0"/></svg>
<div style="position:absolute;left:42.40px;top:593.86px;font-size:11px;line-height:12.65px;color:#000;font-weight:400;white-space:nowrap;letter-spacing:-0.033px;">Laboratory</div>
<div style="position:absolute;left:97px;top:591px;width:128px;height:21px;background:#fff;border-top:1px solid #a0a0a0;border-left:1px solid #a0a0a0;border-bottom:1px solid #fff;border-right:1px solid #fff;box-shadow:inset 1px 1px 0 #696969, inset -1px -1px 0 #e3e3e3;"></div>
<div style="position:absolute;left:207px;top:593px;width:17px;height:17px;background:#f0f0f0;border-top:1px solid #e3e3e3;border-left:1px solid #e3e3e3;border-bottom:1px solid #696969;border-right:1px solid #696969;box-shadow:inset 1px 1px 0 #fff, inset -1px -1px 0 #a0a0a0;"></div>
<svg style="position:absolute;left:212px;top:600px;" width="7" height="4" viewBox="0 0 7 4" shape-rendering="crispEdges"><rect x="0" y="0" width="7" height="1" fill="#000"/><rect x="1" y="1" width="5" height="1" fill="#000"/><rect x="2" y="2" width="3" height="1" fill="#000"/><rect x="3" y="3" width="1" height="1" fill="#000"/></svg>
<div style="position:absolute;left:101.20px;top:595.86px;font-size:11px;line-height:12.65px;color:#000;font-weight:400;white-space:nowrap;letter-spacing:-0.075px;">(all)</div>
<div style="position:absolute;left:16.50px;top:615.86px;font-size:11px;line-height:12.65px;color:#000;font-weight:400;white-space:nowrap;letter-spacing:-0.017px;word-spacing:0.017px;">Project Owner =</div>
<div style="position:absolute;left:97px;top:613px;width:95px;height:20px;background:#fff;border-top:1px solid #a0a0a0;border-left:1px solid #a0a0a0;border-bottom:1px solid #fff;border-right:1px solid #fff;box-shadow:inset 1px 1px 0 #696969, inset -1px -1px 0 #e3e3e3;"></div>
<div style="position:absolute;left:192px;top:613px;width:20px;height:21px;background:#f0f0f0;border-top:1px solid #e3e3e3;border-left:1px solid #e3e3e3;border-bottom:1px solid #696969;border-right:1px solid #696969;box-shadow:inset 1px 1px 0 #fff, inset -1px -1px 0 #a0a0a0;"></div>
<svg style="position:absolute;left:198px;top:627px;" width="9" height="1" viewBox="0 0 9 1" shape-rendering="crispEdges"><rect x="0" y="0" width="1" height="1" fill="#000"/><rect x="3" y="0" width="1" height="1" fill="#000"/><rect x="6" y="0" width="1" height="1" fill="#000"/></svg>
<div style="position:absolute;left:35.40px;top:635.86px;font-size:11px;line-height:12.65px;color:#000;font-weight:400;white-space:nowrap;letter-spacing:-0.110px;word-spacing:0.110px;">Technician =</div>
<div style="position:absolute;left:97px;top:633px;width:95px;height:20px;background:#fff;border-top:1px solid #a0a0a0;border-left:1px solid #a0a0a0;border-bottom:1px solid #fff;border-right:1px solid #fff;box-shadow:inset 1px 1px 0 #696969, inset -1px -1px 0 #e3e3e3;"></div>
<div style="position:absolute;left:192px;top:634px;width:20px;height:20px;background:#f0f0f0;border-top:1px solid #e3e3e3;border-left:1px solid #e3e3e3;border-bottom:1px solid #696969;border-right:1px solid #696969;box-shadow:inset 1px 1px 0 #fff, inset -1px -1px 0 #a0a0a0;"></div>
<svg style="position:absolute;left:198px;top:647px;" width="9" height="1" viewBox="0 0 9 1" shape-rendering="crispEdges"><rect x="0" y="0" width="1" height="1" fill="#000"/><rect x="3" y="0" width="1" height="1" fill="#000"/><rect x="6" y="0" width="1" height="1" fill="#000"/></svg>
<div style="position:absolute;left:49.70px;top:655.86px;font-size:11px;line-height:12.65px;color:#000;font-weight:400;white-space:nowrap;letter-spacing:-0.800px;word-spacing:0.800px;">Client ID =</div>
<div style="position:absolute;left:97px;top:653px;width:95px;height:20px;background:#fff;border-top:1px solid #a0a0a0;border-left:1px solid #a0a0a0;border-bottom:1px solid #fff;border-right:1px solid #fff;box-shadow:inset 1px 1px 0 #696969, inset -1px -1px 0 #e3e3e3;"></div>
<div style="position:absolute;left:192px;top:654px;width:20px;height:20px;background:#f0f0f0;border-top:1px solid #e3e3e3;border-left:1px solid #e3e3e3;border-bottom:1px solid #696969;border-right:1px solid #696969;box-shadow:inset 1px 1px 0 #fff, inset -1px -1px 0 #a0a0a0;"></div>
<svg style="position:absolute;left:198px;top:667px;" width="9" height="1" viewBox="0 0 9 1" shape-rendering="crispEdges"><rect x="0" y="0" width="1" height="1" fill="#000"/><rect x="3" y="0" width="1" height="1" fill="#000"/><rect x="6" y="0" width="1" height="1" fill="#000"/></svg>
<div style="position:absolute;left:41.60px;top:675.86px;font-size:11px;line-height:12.65px;color:#000;font-weight:400;white-space:nowrap;letter-spacing:-0.478px;word-spacing:0.478px;">Project ID =</div>
<div style="position:absolute;left:97px;top:673px;width:95px;height:20px;background:#fff;border-top:1px solid #a0a0a0;border-left:1px solid #a0a0a0;border-bottom:1px solid #fff;border-right:1px solid #fff;box-shadow:inset 1px 1px 0 #696969, inset -1px -1px 0 #e3e3e3;"></div>
<div style="position:absolute;left:192px;top:674px;width:20px;height:20px;background:#f0f0f0;border-top:1px solid #e3e3e3;border-left:1px solid #e3e3e3;border-bottom:1px solid #696969;border-right:1px solid #696969;box-shadow:inset 1px 1px 0 #fff, inset -1px -1px 0 #a0a0a0;"></div>
<svg style="position:absolute;left:198px;top:687px;" width="9" height="1" viewBox="0 0 9 1" shape-rendering="crispEdges"><rect x="0" y="0" width="1" height="1" fill="#000"/><rect x="3" y="0" width="1" height="1" fill="#000"/><rect x="6" y="0" width="1" height="1" fill="#000"/></svg>
<div style="position:absolute;left:22.10px;top:695.86px;font-size:11px;line-height:12.65px;color:#000;font-weight:400;white-space:nowrap;letter-spacing:-0.345px;word-spacing:0.345px;">WorkOrder ID =</div>
<div style="position:absolute;left:97px;top:693px;width:95px;height:20px;background:#fff;border-top:1px solid #a0a0a0;border-left:1px solid #a0a0a0;border-bottom:1px solid #fff;border-right:1px solid #fff;box-shadow:inset 1px 1px 0 #696969, inset -1px -1px 0 #e3e3e3;"></div>
<div style="position:absolute;left:23.50px;top:715.86px;font-size:11px;line-height:12.65px;color:#000;font-weight:400;white-space:nowrap;letter-spacing:-0.564px;word-spacing:0.564px;">Client Req No =</div>
<div style="position:absolute;left:97px;top:713px;width:95px;height:20px;background:#fff;border-top:1px solid #a0a0a0;border-left:1px solid #a0a0a0;border-bottom:1px solid #fff;border-right:1px solid #fff;box-shadow:inset 1px 1px 0 #696969, inset -1px -1px 0 #e3e3e3;"></div>
<div style="position:absolute;left:48.20px;top:735.86px;font-size:11px;line-height:12.65px;color:#000;font-weight:400;white-space:nowrap;letter-spacing:-0.267px;word-spacing:0.267px;">Due Date</div>
<div style="position:absolute;left:97px;top:733px;width:95px;height:20px;background:#fff;border-top:1px solid #a0a0a0;border-left:1px solid #a0a0a0;border-bottom:1px solid #fff;border-right:1px solid #fff;box-shadow:inset 1px 1px 0 #696969, inset -1px -1px 0 #e3e3e3;"></div>
<div style="position:absolute;left:192px;top:734px;width:20px;height:20px;background:#f0f0f0;border-top:1px solid #e3e3e3;border-left:1px solid #e3e3e3;border-bottom:1px solid #696969;border-right:1px solid #696969;box-shadow:inset 1px 1px 0 #fff, inset -1px -1px 0 #a0a0a0;"></div>
<svg style="position:absolute;left:198px;top:747px;" width="9" height="1" viewBox="0 0 9 1" shape-rendering="crispEdges"><rect x="0" y="0" width="1" height="1" fill="#000"/><rect x="3" y="0" width="1" height="1" fill="#000"/><rect x="6" y="0" width="1" height="1" fill="#000"/></svg>
<div style="position:absolute;left:43.40px;top:755.86px;font-size:11px;line-height:12.65px;color:#000;font-weight:400;white-space:nowrap;letter-spacing:-0.400px;word-spacing:0.400px;">Work Date</div>
<div style="position:absolute;left:97px;top:753px;width:95px;height:20px;background:#fff;border-top:1px solid #a0a0a0;border-left:1px solid #a0a0a0;border-bottom:1px solid #fff;border-right:1px solid #fff;box-shadow:inset 1px 1px 0 #696969, inset -1px -1px 0 #e3e3e3;"></div>
<div style="position:absolute;left:192px;top:754px;width:20px;height:20px;background:#f0f0f0;border-top:1px solid #e3e3e3;border-left:1px solid #e3e3e3;border-bottom:1px solid #696969;border-right:1px solid #696969;box-shadow:inset 1px 1px 0 #fff, inset -1px -1px 0 #a0a0a0;"></div>
<svg style="position:absolute;left:198px;top:767px;" width="9" height="1" viewBox="0 0 9 1" shape-rendering="crispEdges"><rect x="0" y="0" width="1" height="1" fill="#000"/><rect x="3" y="0" width="1" height="1" fill="#000"/><rect x="6" y="0" width="1" height="1" fill="#000"/></svg>
<div style="position:absolute;left:43.40px;top:775.86px;font-size:11px;line-height:12.65px;color:#000;font-weight:400;white-space:nowrap;letter-spacing:-0.638px;word-spacing:0.638px;">Complete =</div>
<div style="position:absolute;left:97px;top:773px;width:95px;height:20px;background:#fff;border-top:1px solid #a0a0a0;border-left:1px solid #a0a0a0;border-bottom:1px solid #fff;border-right:1px solid #fff;box-shadow:inset 1px 1px 0 #696969, inset -1px -1px 0 #e3e3e3;"></div>
<div style="position:absolute;left:100.40px;top:756.78px;font-size:10px;line-height:11.50px;color:#000;font-weight:400;white-space:nowrap;letter-spacing:0.115px;">[Last 30 days]</div>
<div style="position:absolute;left:99.60px;top:776.78px;font-size:10px;line-height:11.50px;color:#000;font-weight:400;white-space:nowrap;letter-spacing:0.300px;">No</div>
<div style="position:absolute;left:8px;top:802px;width:201px;height:15px;border-top:1px solid #a0a0a0;border-left:1px solid #a0a0a0;border-right:1px solid #fff;border-bottom:1px solid #fff;"></div>
<div style="position:absolute;left:492px;top:802px;width:186px;height:15px;border-top:1px solid #a0a0a0;border-left:1px solid #a0a0a0;border-right:1px solid #fff;border-bottom:1px solid #fff;"></div>
<div style="position:absolute;left:680px;top:802px;width:94px;height:15px;border-top:1px solid #a0a0a0;border-left:1px solid #a0a0a0;border-right:1px solid #fff;border-bottom:1px solid #fff;"></div>
<div style="position:absolute;left:777px;top:802px;width:35px;height:15px;border-top:1px solid #a0a0a0;border-left:1px solid #a0a0a0;border-right:1px solid #fff;border-bottom:1px solid #fff;"></div>
<div style="position:absolute;left:815px;top:802px;width:26px;height:15px;border-top:1px solid #a0a0a0;border-left:1px solid #a0a0a0;border-right:1px solid #fff;border-bottom:1px solid #fff;"></div>
<div style="position:absolute;left:843px;top:802px;width:33px;height:15px;border-top:1px solid #a0a0a0;border-left:1px solid #a0a0a0;border-right:1px solid #fff;border-bottom:1px solid #fff;"></div>
<div style="position:absolute;left:878px;top:802px;width:63px;height:15px;border-top:1px solid #a0a0a0;border-left:1px solid #a0a0a0;border-right:1px solid #fff;border-bottom:1px solid #fff;"></div>
<div style="position:absolute;left:943px;top:802px;width:50px;height:15px;border-top:1px solid #a0a0a0;border-left:1px solid #a0a0a0;border-right:1px solid #fff;border-bottom:1px solid #fff;"></div>
<div style="position:absolute;left:495.50px;top:803.86px;font-size:11px;line-height:12.65px;color:#000;font-weight:400;white-space:nowrap;letter-spacing:-0.159px;transform:scaleY(1.12);transform-origin:0 10.14px;">Database: DSN=QESTLab_NEW_SQ</div>
<div style="position:absolute;left:683.90px;top:803.86px;font-size:11px;line-height:12.65px;color:#000;font-weight:400;white-space:nowrap;letter-spacing:-0.229px;transform:scaleY(1.12);transform-origin:0 10.14px;">User: spectra.qest</div>
<div style="position:absolute;left:782.00px;top:803.86px;font-size:11px;line-height:12.65px;color:#a0a0a0;font-weight:400;white-space:nowrap;letter-spacing:-1.233px;transform:scaleY(1.12);transform-origin:0 10.14px;">CAPS</div>
<div style="position:absolute;left:818.60px;top:803.86px;font-size:11px;line-height:12.65px;color:#a0a0a0;font-weight:400;white-space:nowrap;letter-spacing:-0.100px;transform:scaleY(1.12);transform-origin:0 10.14px;">INS</div>
<div style="position:absolute;left:846.50px;top:803.86px;font-size:11px;line-height:12.65px;color:#000;font-weight:400;white-space:nowrap;letter-spacing:0.100px;transform:scaleY(1.12);transform-origin:0 10.14px;">NUM</div>
<div style="position:absolute;left:883.00px;top:803.86px;font-size:11px;line-height:12.65px;color:#000;font-weight:400;white-space:nowrap;letter-spacing:0.222px;transform:scaleY(1.12);transform-origin:0 10.14px;">23/03/2009</div>
<div style="position:absolute;left:947.80px;top:803.86px;font-size:11px;line-height:12.65px;color:#000;font-weight:400;white-space:nowrap;letter-spacing:-0.300px;transform:scaleY(1.12);transform-origin:0 10.14px;">4:19 PM</div>
</body></html>
